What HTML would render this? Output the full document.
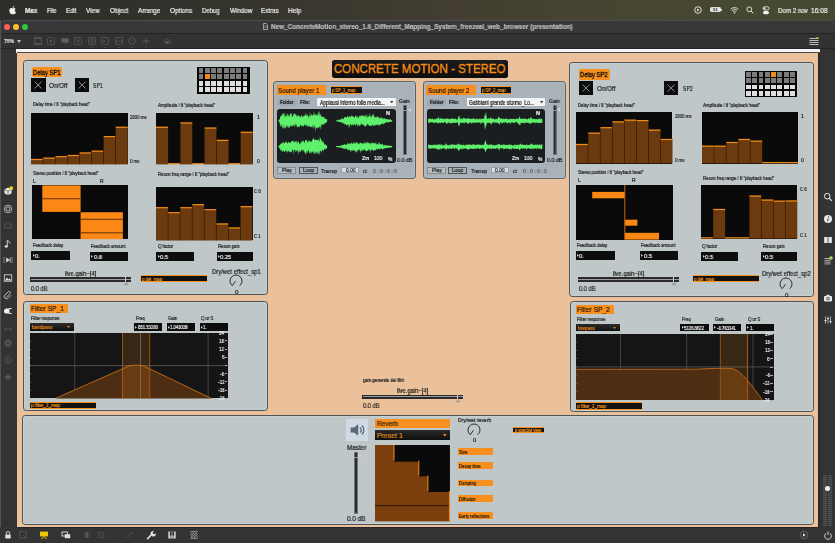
<!DOCTYPE html>
<html><head><meta charset="utf-8"><style>
html,body{margin:0;padding:0;}
body{width:835px;height:543px;overflow:hidden;position:relative;background:#2b2b2b;font-family:"Liberation Sans",sans-serif;}
.a{position:absolute;}
.t{position:absolute;white-space:nowrap;line-height:1;will-change:transform;-webkit-text-stroke:0.2px currentColor;}
svg.a{overflow:visible;}
</style></head><body>
<div class="a " style="left:0px;top:0px;width:835px;height:20px;background:linear-gradient(90deg,#2d2d29 0%,#35342d 30%,#423d31 52%,#474631 75%,#464930 100%);"></div>
<div class="t" style="left:24.60px;top:8px;font-size:6.6px;color:#ececec;font-weight:bold;transform:scaleX(0.958);transform-origin:0 50%;">Max</div>
<div class="t" style="left:46.50px;top:8px;font-size:6.6px;color:#ececec;transform:scaleX(0.893);transform-origin:0 50%;">File</div>
<div class="t" style="left:65.90px;top:8px;font-size:6.6px;color:#ececec;transform:scaleX(0.914);transform-origin:0 50%;">Edit</div>
<div class="t" style="left:86.30px;top:8px;font-size:6.6px;color:#ececec;transform:scaleX(0.952);transform-origin:0 50%;">View</div>
<div class="t" style="left:110.00px;top:8px;font-size:6.6px;color:#ececec;transform:scaleX(0.959);transform-origin:0 50%;">Object</div>
<div class="t" style="left:137.80px;top:8px;font-size:6.6px;color:#ececec;transform:scaleX(0.954);transform-origin:0 50%;">Arrange</div>
<div class="t" style="left:169.80px;top:8px;font-size:6.6px;color:#ececec;transform:scaleX(0.972);transform-origin:0 50%;">Options</div>
<div class="t" style="left:202.10px;top:8px;font-size:6.6px;color:#ececec;transform:scaleX(0.910);transform-origin:0 50%;">Debug</div>
<div class="t" style="left:229.50px;top:8px;font-size:6.6px;color:#ececec;transform:scaleX(0.954);transform-origin:0 50%;">Window</div>
<div class="t" style="left:261.40px;top:8px;font-size:6.6px;color:#ececec;transform:scaleX(0.941);transform-origin:0 50%;">Extras</div>
<div class="t" style="left:288.30px;top:8px;font-size:6.6px;color:#ececec;transform:scaleX(0.965);transform-origin:0 50%;">Help</div>
<svg class="a" style="left:9px;top:6px" width="7" height="8" viewBox="0 0 14 16"><path fill="#f0f0f0" d="M11.6 8.5c0-2 1.6-2.9 1.7-3-0.9-1.4-2.4-1.6-2.9-1.6-1.2-0.1-2.4 0.7-3 0.7-0.6 0-1.6-0.7-2.6-0.7C3.4 4 2 4.8 1.3 6.1c-1.5 2.6-0.4 6.4 1.1 8.5 0.7 1 1.5 2.2 2.6 2.1 1-0.1 1.4-0.7 2.7-0.7 1.2 0 1.6 0.7 2.7 0.6 1.100-0 1.800-1 2.500-2.100 0.8-1.1 1.100-2.200 1.100-2.300-0.1 0-2.300-0.900-2.400-3.700zM9.600 2.600c0.600-0.700 1-1.700 0.900-2.600-0.800 0-1.800 0.500-2.400 1.200-0.500 0.600-1 1.600-0.900 2.500 0.900 0.100 1.800-0.400 2.400-1.100z"/></svg>
<svg class="a" style="left:694px;top:6px" width="8" height="8" viewBox="0 0 8 8"><circle cx="4" cy="4" r="3.3" fill="none" stroke="#eee" stroke-width="0.9"/><path d="M3.2 2.6L5.4 4 3.2 5.4z" fill="#eee"/></svg>
<div class="a " style="left:710px;top:7.4px;width:11px;height:4.8px;border:0.8px solid #ddd;border-radius:1.2px;background:#e6e6e6;box-sizing:border-box;"></div>
<div class="t" style="left:713.16px;top:8px;font-size:4.2px;color:#2a2a2a;font-weight:bold;-webkit-text-stroke:0;">53</div>
<div class="a " style="left:721.3px;top:8.8px;width:1px;height:2px;background:#ddd;"></div>
<svg class="a" style="left:729.5px;top:6px" width="9" height="8" viewBox="0 0 9 8"><path d="M0.6 3.2a5.6 5.6 0 0 1 7.8 0M1.9 4.6a3.7 3.7 0 0 1 5.2 0M3.2 6a1.8 1.8 0 0 1 2.6 0" fill="none" stroke="#eee" stroke-width="0.9"/><circle cx="4.5" cy="7.2" r="0.6" fill="#eee"/></svg>
<svg class="a" style="left:746px;top:6px" width="8" height="8" viewBox="0 0 8 8"><circle cx="3.3" cy="3.3" r="2.4" fill="none" stroke="#eee" stroke-width="0.9"/><path d="M5 5L7.3 7.3" stroke="#eee" stroke-width="1"/></svg>
<svg class="a" style="left:762px;top:5.5px" width="8" height="9" viewBox="0 0 8 9"><rect x="1" y="0.8" width="6" height="3.2" rx="1.6" fill="none" stroke="#eee" stroke-width="0.9"/><rect x="1" y="5" width="6" height="3.2" rx="1.6" fill="#eee"/><circle cx="2.6" cy="2.4" r="0.9" fill="#eee"/></svg>
<div class="t" style="left:777.80px;top:8px;font-size:6.6px;color:#ececec;transform:scaleX(0.937);transform-origin:0 50%;">Dom 2 nov</div>
<div class="t" style="left:811.40px;top:8px;font-size:6.6px;color:#ececec;transform:scaleX(1.005);transform-origin:0 50%;">16:08</div>
<div class="a " style="left:0px;top:20.3px;width:835px;height:13.2px;background:#383838;border-radius:5px 5px 0 0;box-shadow:inset 0 0.6px 0 #5a5e66;"></div>
<div class="a " style="left:3.9px;top:23.9px;width:6.2px;height:6.2px;background:#fe5f57;border-radius:50%;"></div>
<div class="a " style="left:12.9px;top:23.9px;width:6.2px;height:6.2px;background:#febc2e;border-radius:50%;"></div>
<div class="a " style="left:21.9px;top:23.9px;width:6.2px;height:6.2px;background:#2bc840;border-radius:50%;"></div>
<svg class="a" style="left:262.5px;top:23px" width="5" height="7" viewBox="0 0 5 7"><path d="M0.5 0.5h2.6l1.4 1.4v4.6h-4z" fill="none" stroke="#bbb" stroke-width="0.8"/><path d="M1.3 3h2.4M1.3 4.3h2.4" stroke="#bbb" stroke-width="0.5"/></svg>
<div class="t" style="left:270.60px;top:24px;font-size:6.6px;color:#bdbdbd;font-weight:bold;transform:scaleX(0.966);transform-origin:0 50%;">New_ConcreteMotion_stereo_1.6_Different_Mapping_System_freezeal_web_browser (presentation)</div>
<div class="a " style="left:0px;top:33.3px;width:835px;height:15.4px;background:#323232;border-top:0.8px solid #222;border-bottom:0.8px solid #242424;box-sizing:border-box;"></div>
<div class="t" style="left:4.00px;top:39px;font-size:5.6px;color:#d8d8d8;font-weight:bold;transform:scaleX(0.892);transform-origin:0 50%;">75%</div>
<svg class="a" style="left:16.5px;top:40px" width="4" height="3" viewBox="0 0 4 3"><path d="M0 0h4L2 3z" fill="#ccc"/></svg>
<svg class="a" style="left:33.8px;top:37.3px" width="8" height="8" viewBox="0 0 8 8"><rect x="0.8" y="1" width="6.4" height="6" fill="none" stroke="#606060" stroke-width="0.7"/><path d="M0.4 1h7.2M0.4 7h7.2" stroke="#606060" stroke-width="1.2"/></svg>
<svg class="a" style="left:47.1px;top:37.3px" width="8" height="8" viewBox="0 0 8 8"><rect x="0.5" y="0.8" width="7" height="6.4" rx="0.6" fill="none" stroke="#606060" stroke-width="0.7"/><rect x="2.6" y="3.3" width="2.8" height="1.4" fill="#606060"/></svg>
<svg class="a" style="left:60.7px;top:37.3px" width="8" height="8" viewBox="0 0 8 8"><path d="M0.4 1.2h7.2v4.2H5.2L4.4 7 3.8 5.4H0.4z" fill="#606060"/></svg>
<svg class="a" style="left:74.1px;top:37.3px" width="8" height="8" viewBox="0 0 8 8"><rect x="0.5" y="0.6" width="7" height="6.8" rx="0.6" fill="none" stroke="#606060" stroke-width="0.7"/><path d="M2.2 2.3l3.6 3.4M5.8 2.3L2.2 5.7" stroke="#606060" stroke-width="0.6"/></svg>
<svg class="a" style="left:87.7px;top:37.3px" width="8" height="8" viewBox="0 0 8 8"><rect x="0.5" y="0.6" width="7" height="6.8" rx="0.6" fill="none" stroke="#606060" stroke-width="0.7"/><circle cx="4" cy="4" r="2" fill="none" stroke="#606060" stroke-width="0.6"/><path d="M3.4 3l1.4 1-1.4 1z" fill="#606060"/></svg>
<svg class="a" style="left:90.7px;top:46.6px" width="2" height="1.2" viewBox="0 0 2 1.2"><path d="M0 0h2L1 1.2z" fill="#5a5a5a"/></svg>
<svg class="a" style="left:101.1px;top:37.3px" width="8" height="8" viewBox="0 0 8 8"><rect x="0.5" y="0.6" width="7" height="6.8" rx="0.6" fill="none" stroke="#606060" stroke-width="0.7"/><path d="M2.4 2.6l2 1.4-2 1.4z" fill="#606060"/></svg>
<svg class="a" style="left:104.1px;top:46.6px" width="2" height="1.2" viewBox="0 0 2 1.2"><path d="M0 0h2L1 1.2z" fill="#5a5a5a"/></svg>
<svg class="a" style="left:114.6px;top:37.3px" width="8" height="8" viewBox="0 0 8 8"><rect x="0.5" y="0.6" width="7" height="6.8" rx="0.6" fill="none" stroke="#606060" stroke-width="0.7"/><path d="M0.5 4h7" stroke="#606060" stroke-width="0.7"/></svg>
<svg class="a" style="left:117.6px;top:46.6px" width="2" height="1.2" viewBox="0 0 2 1.2"><path d="M0 0h2L1 1.2z" fill="#5a5a5a"/></svg>
<svg class="a" style="left:128.1px;top:37.3px" width="8" height="8" viewBox="0 0 8 8"><circle cx="4" cy="4" r="3.4" fill="none" stroke="#606060" stroke-width="0.7"/><path d="M4 4l1.6-2" stroke="#606060" stroke-width="0.7"/></svg>
<svg class="a" style="left:131.1px;top:46.6px" width="2" height="1.2" viewBox="0 0 2 1.2"><path d="M0 0h2L1 1.2z" fill="#5a5a5a"/></svg>
<svg class="a" style="left:141.7px;top:37.3px" width="8" height="8" viewBox="0 0 8 8"><path d="M4 0.8v6.4M0.8 4h6.4" stroke="#606060" stroke-width="0.8"/></svg>
<svg class="a" style="left:144.7px;top:46.6px" width="2" height="1.2" viewBox="0 0 2 1.2"><path d="M0 0h2L1 1.2z" fill="#5a5a5a"/></svg>
<svg class="a" style="left:163.3px;top:37.3px" width="8" height="8" viewBox="0 0 8 8"><path d="M1 4.2L4 1.2l3 3-3 3z" fill="none" stroke="#606060" stroke-width="0.8"/><path d="M1.6 4.4h4.8L4 6.8z" fill="#606060"/><path d="M7.4 5.2v1.8" stroke="#606060" stroke-width="0.8"/></svg>
<svg class="a" style="left:809px;top:37px" width="10" height="9" viewBox="0 0 10 9"><path d="M0.5 1.5h9M0.5 3.5h9M0.5 5.5h9M0.5 7.5h9" stroke="#bbb" stroke-width="1.2"/><rect x="7.5" y="0" width="2" height="1.4" fill="#e0b000"/></svg>
<div class="a " style="left:0px;top:48.5px;width:16.5px;height:479px;background:#333333;"></div>
<div class="a " style="left:0px;top:20.3px;width:1.1px;height:523px;background:#4f5459;"></div>
<div class="a " style="left:819.5px;top:48.5px;width:15.5px;height:479px;background:#333333;"></div>
<div class="a " style="left:0px;top:527.3px;width:835px;height:15.7px;background:#333333;"></div>
<div class="a " style="left:16px;top:527.3px;width:804px;height:0.8px;background:#262626;"></div>
<div class="a " style="left:16px;top:49px;width:804px;height:3.5px;background:#f4f4f4;"></div>
<div class="a " style="left:16.5px;top:52.3px;width:803px;height:0.8px;background:#4a4a4a;"></div>
<div class="a " style="left:16.5px;top:52.5px;width:1px;height:475px;background:#4a4a4a;"></div>
<div class="a " style="left:17.3px;top:53px;width:801.2px;height:474.3px;background:#ebc19b;"></div>
<div class="a " style="left:22.5px;top:60.2px;width:245.6px;height:234.9px;background:#bfc7c8;border:1px solid #4f5456;border-radius:3.2px;box-sizing:border-box;box-shadow:inset 0 0 0 0.6px #cfd9d9;"></div>
<div class="a " style="left:31.6px;top:66.9px;width:30.7px;height:10px;background:#f7901e;border-radius:2px;"></div>
<div class="t " style="left:33.2px;top:68.0px;font-size:7.4px;color:#1b1206;"></div>
<div class="t" style="left:33.00px;top:69px;font-size:7.2px;color:#140c04;transform:scaleX(0.811);transform-origin:0 50%;-webkit-text-stroke:0.3px currentColor;">Delay SP1</div>
<div class="a " style="left:31.4px;top:77.9px;width:14.2px;height:14.2px;background:#0b0b0b;"></div>
<svg class="a" style="left:31.4px;top:77.9px" width="14.2" height="14.2" viewBox="0 0 14 14"><path d="M3.6 3.6L10.4 10.4M10.4 3.6L3.6 10.4" stroke="#a0a0a0" stroke-width="0.9"/></svg>
<div class="t" style="left:48.90px;top:83px;font-size:6.6px;color:#222;transform:scaleX(0.952);transform-origin:0 50%;">On/Off</div>
<div class="a " style="left:74.6px;top:77.9px;width:14.2px;height:14.2px;background:#0b0b0b;"></div>
<svg class="a" style="left:74.6px;top:77.9px" width="14.2" height="14.2" viewBox="0 0 14 14"><path d="M3.6 3.6L10.4 10.4M10.4 3.6L3.6 10.4" stroke="#a0a0a0" stroke-width="0.9"/></svg>
<div class="t" style="left:92.70px;top:83px;font-size:6.6px;color:#222;transform:scaleX(0.786);transform-origin:0 50%;">SP1</div>
<div class="a " style="left:197.1px;top:67.1px;width:52.8px;height:26.6px;background:#060606;"></div>
<div class="a " style="left:198.5px;top:68.1px;width:4.9px;height:4.9px;background:#7b7b7b;"></div>
<div class="a " style="left:204.8px;top:68.1px;width:4.9px;height:4.9px;background:#7b7b7b;"></div>
<div class="a " style="left:211.1px;top:68.1px;width:4.9px;height:4.9px;background:#7b7b7b;"></div>
<div class="a " style="left:217.4px;top:68.1px;width:4.9px;height:4.9px;background:#7b7b7b;"></div>
<div class="a " style="left:223.7px;top:68.1px;width:4.9px;height:4.9px;background:#7b7b7b;"></div>
<div class="a " style="left:230.0px;top:68.1px;width:4.9px;height:4.9px;background:#7b7b7b;"></div>
<div class="a " style="left:236.3px;top:68.1px;width:4.9px;height:4.9px;background:#7b7b7b;"></div>
<div class="a " style="left:242.6px;top:68.1px;width:4.9px;height:4.9px;background:#7b7b7b;"></div>
<div class="a " style="left:198.5px;top:74.39999999999999px;width:4.9px;height:4.9px;background:#7b7b7b;"></div>
<div class="a " style="left:204.8px;top:74.39999999999999px;width:4.9px;height:4.9px;background:#f28a16;"></div>
<div class="a " style="left:211.1px;top:74.39999999999999px;width:4.9px;height:4.9px;background:#7b7b7b;"></div>
<div class="a " style="left:217.4px;top:74.39999999999999px;width:4.9px;height:4.9px;background:#7b7b7b;"></div>
<div class="a " style="left:223.7px;top:74.39999999999999px;width:4.9px;height:4.9px;background:#7b7b7b;"></div>
<div class="a " style="left:230.0px;top:74.39999999999999px;width:4.9px;height:4.9px;background:#7b7b7b;"></div>
<div class="a " style="left:236.3px;top:74.39999999999999px;width:4.9px;height:4.9px;background:#7b7b7b;"></div>
<div class="a " style="left:242.6px;top:74.39999999999999px;width:4.9px;height:4.9px;background:#7b7b7b;"></div>
<div class="a " style="left:198.5px;top:80.69999999999999px;width:4.9px;height:4.9px;background:#dedede;"></div>
<div class="a " style="left:204.8px;top:80.69999999999999px;width:4.9px;height:4.9px;background:#dedede;"></div>
<div class="a " style="left:211.1px;top:80.69999999999999px;width:4.9px;height:4.9px;background:#dedede;"></div>
<div class="a " style="left:217.4px;top:80.69999999999999px;width:4.9px;height:4.9px;background:#dedede;"></div>
<div class="a " style="left:223.7px;top:80.69999999999999px;width:4.9px;height:4.9px;background:#dedede;"></div>
<div class="a " style="left:230.0px;top:80.69999999999999px;width:4.9px;height:4.9px;background:#dedede;"></div>
<div class="a " style="left:236.3px;top:80.69999999999999px;width:4.9px;height:4.9px;background:#dedede;"></div>
<div class="a " style="left:242.6px;top:80.69999999999999px;width:4.9px;height:4.9px;background:#dedede;"></div>
<div class="a " style="left:198.5px;top:87.0px;width:4.9px;height:4.9px;background:#dedede;"></div>
<div class="a " style="left:204.8px;top:87.0px;width:4.9px;height:4.9px;background:#dedede;"></div>
<div class="a " style="left:211.1px;top:87.0px;width:4.9px;height:4.9px;background:#dedede;"></div>
<div class="a " style="left:217.4px;top:87.0px;width:4.9px;height:4.9px;background:#dedede;"></div>
<div class="a " style="left:223.7px;top:87.0px;width:4.9px;height:4.9px;background:#dedede;"></div>
<div class="a " style="left:230.0px;top:87.0px;width:4.9px;height:4.9px;background:#dedede;"></div>
<div class="a " style="left:236.3px;top:87.0px;width:4.9px;height:4.9px;background:#dedede;"></div>
<div class="a " style="left:242.6px;top:87.0px;width:4.9px;height:4.9px;background:#dedede;"></div>
<div class="t" style="left:33.00px;top:102px;font-size:5.0px;color:#1e1e1e;transform:scaleX(0.838);transform-origin:0 50%;">Delay time / 8 "playback head"</div>
<div class="a " style="left:31.4px;top:113px;width:96.7px;height:51.4px;background:#0a0a0a;"></div>
<svg class="a" style="left:31.4px;top:113px" width="96.7" height="51.4" viewBox="0 0 96.7 51.4"><rect x="0.00" y="45.90" width="12.09" height="5.50" fill="#6b3a0f"/><rect x="0.00" y="45.90" width="12.09" height="1.2" fill="#f08a1a"/><rect x="12.09" y="44.60" width="12.09" height="6.80" fill="#6b3a0f"/><rect x="12.09" y="44.60" width="12.09" height="1.2" fill="#f08a1a"/><rect x="11.84" y="44.60" width="0.5" height="6.80" fill="#2a1605"/><rect x="24.18" y="43.10" width="12.09" height="8.30" fill="#6b3a0f"/><rect x="24.18" y="43.10" width="12.09" height="1.2" fill="#f08a1a"/><rect x="23.93" y="43.10" width="0.5" height="8.30" fill="#2a1605"/><rect x="36.26" y="41.90" width="12.09" height="9.50" fill="#6b3a0f"/><rect x="36.26" y="41.90" width="12.09" height="1.2" fill="#f08a1a"/><rect x="36.01" y="41.90" width="0.5" height="9.50" fill="#2a1605"/><rect x="48.35" y="39.40" width="12.09" height="12.00" fill="#6b3a0f"/><rect x="48.35" y="39.40" width="12.09" height="1.2" fill="#f08a1a"/><rect x="48.10" y="39.40" width="0.5" height="12.00" fill="#2a1605"/><rect x="60.44" y="37.60" width="12.09" height="13.80" fill="#6b3a0f"/><rect x="60.44" y="37.60" width="12.09" height="1.2" fill="#f08a1a"/><rect x="60.19" y="37.60" width="0.5" height="13.80" fill="#2a1605"/><rect x="72.53" y="23.00" width="12.09" height="28.40" fill="#6b3a0f"/><rect x="72.53" y="23.00" width="12.09" height="1.2" fill="#f08a1a"/><rect x="72.28" y="23.00" width="0.5" height="28.40" fill="#2a1605"/><rect x="84.61" y="13.70" width="12.09" height="37.70" fill="#6b3a0f"/><rect x="84.61" y="13.70" width="12.09" height="1.2" fill="#f08a1a"/><rect x="84.36" y="13.70" width="0.5" height="37.70" fill="#2a1605"/></svg>
<div class="t" style="left:130.00px;top:115px;font-size:5.0px;color:#1e1e1e;transform:scaleX(0.860);transform-origin:0 50%;">2000 ms</div>
<div class="t" style="left:130.00px;top:159px;font-size:5.0px;color:#1e1e1e;transform:scaleX(0.860);transform-origin:0 50%;">0 ms</div>
<div class="t" style="left:158.00px;top:103px;font-size:5.0px;color:#1e1e1e;transform:scaleX(0.860);transform-origin:0 50%;">Amplitude / 8 "playback head"</div>
<div class="a " style="left:156.3px;top:113px;width:96.7px;height:51.4px;background:#0a0a0a;"></div>
<svg class="a" style="left:156.3px;top:113px" width="96.7" height="51.4" viewBox="0 0 96.7 51.4"><rect x="0.00" y="13.70" width="12.09" height="37.70" fill="#6b3a0f"/><rect x="0.00" y="13.70" width="12.09" height="1.2" fill="#f08a1a"/><rect x="12.09" y="50.10" width="12.09" height="1.3" fill="#f08a1a"/><rect x="24.18" y="9.40" width="12.09" height="42.00" fill="#6b3a0f"/><rect x="24.18" y="9.40" width="12.09" height="1.2" fill="#f08a1a"/><rect x="23.93" y="9.40" width="0.5" height="42.00" fill="#2a1605"/><rect x="36.26" y="50.10" width="12.09" height="1.3" fill="#f08a1a"/><rect x="48.35" y="14.50" width="12.09" height="36.90" fill="#6b3a0f"/><rect x="48.35" y="14.50" width="12.09" height="1.2" fill="#f08a1a"/><rect x="48.10" y="14.50" width="0.5" height="36.90" fill="#2a1605"/><rect x="60.44" y="26.80" width="12.09" height="24.60" fill="#6b3a0f"/><rect x="60.44" y="26.80" width="12.09" height="1.2" fill="#f08a1a"/><rect x="60.19" y="26.80" width="0.5" height="24.60" fill="#2a1605"/><rect x="72.53" y="50.10" width="12.09" height="1.3" fill="#f08a1a"/><rect x="84.61" y="18.70" width="12.09" height="32.70" fill="#6b3a0f"/><rect x="84.61" y="18.70" width="12.09" height="1.2" fill="#f08a1a"/><rect x="84.36" y="18.70" width="0.5" height="32.70" fill="#2a1605"/></svg>
<div class="t" style="left:257.00px;top:115px;font-size:5.0px;color:#1e1e1e;">1</div>
<div class="t" style="left:257.00px;top:159px;font-size:5.0px;color:#1e1e1e;">0</div>
<div class="t" style="left:33.20px;top:171px;font-size:5.0px;color:#1e1e1e;transform:scaleX(0.845);transform-origin:0 50%;">Stereo position / 8 "playback head"</div>
<div class="t" style="left:33.20px;top:179px;font-size:5.0px;color:#1e1e1e;">L</div>
<div class="t" style="left:100.20px;top:179px;font-size:5.0px;color:#1e1e1e;">R</div>
<svg class="a" style="left:31.7px;top:185.2px;background:#0a0a0a" width="96.4" height="54.2" viewBox="0 0 96.4 54.2"><rect x="10.30" y="0.40" width="38.30" height="26.50" fill="#fb8714"/><rect x="48.60" y="27.20" width="42.30" height="27.00" fill="#fb8714"/><rect x="10.30" y="13.10" width="38.30" height="1.2" fill="#7a3e06"/><rect x="48.60" y="33.70" width="42.30" height="1.2" fill="#7a3e06"/><rect x="48.60" y="47.20" width="42.30" height="1.2" fill="#7a3e06"/></svg>
<div class="t" style="left:158.00px;top:172px;font-size:5.0px;color:#1e1e1e;transform:scaleX(0.860);transform-origin:0 50%;">Reson freq range / 8 "playback head"</div>
<div class="a " style="left:156.3px;top:186.9px;width:96.3px;height:53.5px;background:#0a0a0a;"></div>
<svg class="a" style="left:156.3px;top:186.9px" width="96.3" height="53.5" viewBox="0 0 96.3 53.5"><rect x="0.00" y="20.10" width="12.04" height="33.40" fill="#6b3a0f"/><rect x="0.00" y="20.10" width="12.04" height="1.2" fill="#f08a1a"/><rect x="12.04" y="25.10" width="12.04" height="28.40" fill="#6b3a0f"/><rect x="12.04" y="25.10" width="12.04" height="1.2" fill="#f08a1a"/><rect x="11.79" y="25.10" width="0.5" height="28.40" fill="#2a1605"/><rect x="24.07" y="20.10" width="12.04" height="33.40" fill="#6b3a0f"/><rect x="24.07" y="20.10" width="12.04" height="1.2" fill="#f08a1a"/><rect x="23.82" y="20.10" width="0.5" height="33.40" fill="#2a1605"/><rect x="36.11" y="17.10" width="12.04" height="36.40" fill="#6b3a0f"/><rect x="36.11" y="17.10" width="12.04" height="1.2" fill="#f08a1a"/><rect x="35.86" y="17.10" width="0.5" height="36.40" fill="#2a1605"/><rect x="48.15" y="22.10" width="12.04" height="31.40" fill="#6b3a0f"/><rect x="48.15" y="22.10" width="12.04" height="1.2" fill="#f08a1a"/><rect x="47.90" y="22.10" width="0.5" height="31.40" fill="#2a1605"/><rect x="60.19" y="36.40" width="12.04" height="17.10" fill="#6b3a0f"/><rect x="60.19" y="36.40" width="12.04" height="1.2" fill="#f08a1a"/><rect x="59.94" y="36.40" width="0.5" height="17.10" fill="#2a1605"/><rect x="72.22" y="40.40" width="12.04" height="13.10" fill="#6b3a0f"/><rect x="72.22" y="40.40" width="12.04" height="1.2" fill="#f08a1a"/><rect x="71.97" y="40.40" width="0.5" height="13.10" fill="#2a1605"/><rect x="84.26" y="19.10" width="12.04" height="34.40" fill="#6b3a0f"/><rect x="84.26" y="19.10" width="12.04" height="1.2" fill="#f08a1a"/><rect x="84.01" y="19.10" width="0.5" height="34.40" fill="#2a1605"/></svg>
<div class="t" style="left:254.40px;top:189px;font-size:5.0px;color:#1e1e1e;transform:scaleX(0.860);transform-origin:0 50%;">C 6</div>
<div class="t" style="left:254.40px;top:234px;font-size:5.0px;color:#1e1e1e;transform:scaleX(0.860);transform-origin:0 50%;">C 1</div>
<div class="t" style="left:33.00px;top:243px;font-size:5.0px;color:#1e1e1e;transform:scaleX(0.860);transform-origin:0 50%;">Feedback delay</div>
<div class="a " style="left:31.4px;top:251px;width:39px;height:8.8px;background:#0d0d0d;"></div>
<svg class="a" style="left:32.699999999999996px;top:254.0px" width="2" height="2.8" viewBox="0 0 2 2.8"><path d="M0 0L1.9 1.4 0 2.8z" fill="#d8d8d8"/></svg>
<div class="t" style="left:35.00px;top:253px;font-size:6.2px;color:#f2f2f2;transform:scaleX(0.920);transform-origin:0 50%;">0.</div>
<div class="t" style="left:91.30px;top:244px;font-size:5.0px;color:#1e1e1e;transform:scaleX(0.860);transform-origin:0 50%;">Feedback amount</div>
<div class="a " style="left:90px;top:251.7px;width:38px;height:9.3px;background:#0d0d0d;"></div>
<svg class="a" style="left:91.3px;top:254.94999999999996px" width="2" height="2.8" viewBox="0 0 2 2.8"><path d="M0 0L1.9 1.4 0 2.8z" fill="#d8d8d8"/></svg>
<div class="t" style="left:93.60px;top:254px;font-size:6.2px;color:#f2f2f2;transform:scaleX(0.920);transform-origin:0 50%;">0.8</div>
<div class="t" style="left:158.00px;top:244px;font-size:5.0px;color:#1e1e1e;transform:scaleX(0.860);transform-origin:0 50%;">Q factor</div>
<div class="a " style="left:156.4px;top:251.7px;width:37.3px;height:9.3px;background:#0d0d0d;"></div>
<svg class="a" style="left:157.70000000000002px;top:254.94999999999996px" width="2" height="2.8" viewBox="0 0 2 2.8"><path d="M0 0L1.9 1.4 0 2.8z" fill="#d8d8d8"/></svg>
<div class="t" style="left:160.00px;top:254px;font-size:6.2px;color:#f2f2f2;transform:scaleX(0.920);transform-origin:0 50%;">0.5</div>
<div class="t" style="left:218.00px;top:244px;font-size:5.0px;color:#1e1e1e;transform:scaleX(0.860);transform-origin:0 50%;">Reson gain</div>
<div class="a " style="left:216.6px;top:251.7px;width:36px;height:9.3px;background:#0d0d0d;"></div>
<svg class="a" style="left:217.9px;top:254.94999999999996px" width="2" height="2.8" viewBox="0 0 2 2.8"><path d="M0 0L1.9 1.4 0 2.8z" fill="#d8d8d8"/></svg>
<div class="t" style="left:220.20px;top:254px;font-size:6.2px;color:#f2f2f2;transform:scaleX(0.920);transform-origin:0 50%;">0.25</div>
<div class="t" style="left:64.85px;top:270px;font-size:7.0px;color:#1a1a1a;transform:scaleX(0.833);transform-origin:0 50%;">live.gain~[4]</div>
<div class="a " style="left:30.2px;top:277.4px;width:101px;height:4.2px;background:#2a2a2a;"></div>
<div class="a " style="left:30.5px;top:278.9px;width:100.4px;height:1.0px;background:#9a9a9a;"></div>
<svg class="a" style="left:123.6px;top:281.59999999999997px" width="4.4" height="3" viewBox="0 0 4.4 3"><path d="M2.2 0.2L4 2.8H0.4z" fill="#c9cfd0" stroke="#666" stroke-width="0.5"/></svg>
<div class="a " style="left:125.3px;top:277.2px;width:1px;height:4.6px;background:#d0d0d0;"></div>
<div class="t" style="left:31.00px;top:286px;font-size:6.6px;color:#1e1e1e;transform:scaleX(0.860);transform-origin:0 50%;">0.0 dB</div>
<div class="a " style="left:141.3px;top:274.59999999999997px;width:66.2px;height:7.8999999999999995px;background:#121212;border:1.2px solid #f7901e;border-width:1.2px 0;box-sizing:border-box;"></div>
<div class="t" style="left:142.10px;top:278px;font-size:4.8px;color:#f7901e;transform:scaleX(0.906);transform-origin:0 50%;">p del_map</div>
<div class="t" style="left:211.95px;top:268px;font-size:7px;color:#1e1e1e;transform:scaleX(0.842);transform-origin:0 50%;">Dry/wet effect_sp1</div>
<svg class="a" style="left:229.3px;top:273.7px" width="14.0" height="14.0" viewBox="-7.0 -7.0 14.0 14.0"><path d="M-3.72 4.68A6.0 6.0 0 1 1 3.72 4.68" fill="none" stroke="#1e1e1e" stroke-width="0.9"/><path d="M-0.60 0.30L-3.72 4.68" stroke="#1e1e1e" stroke-width="0.9"/></svg>
<div class="t" style="left:234.58px;top:289px;font-size:6.2px;color:#1e1e1e;">0</div>
<div class="a " style="left:568.8px;top:62.4px;width:244.8px;height:234.6px;background:#bfc7c8;border:1px solid #4f5456;border-radius:3.2px;box-sizing:border-box;box-shadow:inset 0 0 0 0.6px #cfd9d9;"></div>
<div class="a " style="left:578.8px;top:69.2px;width:31px;height:10.5px;background:#f7901e;border-radius:2px;"></div>
<div class="t " style="left:580.4px;top:70.55px;font-size:7.4px;color:#1b1206;"></div>
<div class="t" style="left:580.30px;top:71px;font-size:7.2px;color:#140c04;transform:scaleX(0.811);transform-origin:0 50%;-webkit-text-stroke:0.3px currentColor;">Delay SP2</div>
<div class="a " style="left:578.5px;top:80.9px;width:14.2px;height:14.2px;background:#0b0b0b;"></div>
<svg class="a" style="left:578.5px;top:80.9px" width="14.2" height="14.2" viewBox="0 0 14 14"><path d="M3.6 3.6L10.4 10.4M10.4 3.6L3.6 10.4" stroke="#a0a0a0" stroke-width="0.9"/></svg>
<div class="t" style="left:596.90px;top:86px;font-size:6.6px;color:#222;transform:scaleX(0.952);transform-origin:0 50%;">On/Off</div>
<div class="a " style="left:663.5px;top:80.7px;width:14.2px;height:14.2px;background:#0b0b0b;"></div>
<svg class="a" style="left:663.5px;top:80.7px" width="14.2" height="14.2" viewBox="0 0 14 14"><path d="M3.6 3.6L10.4 10.4M10.4 3.6L3.6 10.4" stroke="#a0a0a0" stroke-width="0.9"/></svg>
<div class="t" style="left:682.80px;top:86px;font-size:6.6px;color:#222;transform:scaleX(0.786);transform-origin:0 50%;">SP2</div>
<div class="a " style="left:744.5px;top:70.9px;width:52.8px;height:26.6px;background:#060606;"></div>
<div class="a " style="left:745.9px;top:71.9px;width:4.9px;height:4.9px;background:#7b7b7b;"></div>
<div class="a " style="left:752.1999999999999px;top:71.9px;width:4.9px;height:4.9px;background:#7b7b7b;"></div>
<div class="a " style="left:758.5px;top:71.9px;width:4.9px;height:4.9px;background:#7b7b7b;"></div>
<div class="a " style="left:764.8px;top:71.9px;width:4.9px;height:4.9px;background:#7b7b7b;"></div>
<div class="a " style="left:771.1px;top:71.9px;width:4.9px;height:4.9px;background:#f28a16;"></div>
<div class="a " style="left:777.4px;top:71.9px;width:4.9px;height:4.9px;background:#7b7b7b;"></div>
<div class="a " style="left:783.6999999999999px;top:71.9px;width:4.9px;height:4.9px;background:#7b7b7b;"></div>
<div class="a " style="left:790.0px;top:71.9px;width:4.9px;height:4.9px;background:#7b7b7b;"></div>
<div class="a " style="left:745.9px;top:78.2px;width:4.9px;height:4.9px;background:#7b7b7b;"></div>
<div class="a " style="left:752.1999999999999px;top:78.2px;width:4.9px;height:4.9px;background:#7b7b7b;"></div>
<div class="a " style="left:758.5px;top:78.2px;width:4.9px;height:4.9px;background:#7b7b7b;"></div>
<div class="a " style="left:764.8px;top:78.2px;width:4.9px;height:4.9px;background:#7b7b7b;"></div>
<div class="a " style="left:771.1px;top:78.2px;width:4.9px;height:4.9px;background:#7b7b7b;"></div>
<div class="a " style="left:777.4px;top:78.2px;width:4.9px;height:4.9px;background:#7b7b7b;"></div>
<div class="a " style="left:783.6999999999999px;top:78.2px;width:4.9px;height:4.9px;background:#7b7b7b;"></div>
<div class="a " style="left:790.0px;top:78.2px;width:4.9px;height:4.9px;background:#7b7b7b;"></div>
<div class="a " style="left:745.9px;top:84.5px;width:4.9px;height:4.9px;background:#dedede;"></div>
<div class="a " style="left:752.1999999999999px;top:84.5px;width:4.9px;height:4.9px;background:#dedede;"></div>
<div class="a " style="left:758.5px;top:84.5px;width:4.9px;height:4.9px;background:#dedede;"></div>
<div class="a " style="left:764.8px;top:84.5px;width:4.9px;height:4.9px;background:#dedede;"></div>
<div class="a " style="left:771.1px;top:84.5px;width:4.9px;height:4.9px;background:#dedede;"></div>
<div class="a " style="left:777.4px;top:84.5px;width:4.9px;height:4.9px;background:#dedede;"></div>
<div class="a " style="left:783.6999999999999px;top:84.5px;width:4.9px;height:4.9px;background:#dedede;"></div>
<div class="a " style="left:790.0px;top:84.5px;width:4.9px;height:4.9px;background:#dedede;"></div>
<div class="a " style="left:745.9px;top:90.80000000000001px;width:4.9px;height:4.9px;background:#dedede;"></div>
<div class="a " style="left:752.1999999999999px;top:90.80000000000001px;width:4.9px;height:4.9px;background:#dedede;"></div>
<div class="a " style="left:758.5px;top:90.80000000000001px;width:4.9px;height:4.9px;background:#dedede;"></div>
<div class="a " style="left:764.8px;top:90.80000000000001px;width:4.9px;height:4.9px;background:#dedede;"></div>
<div class="a " style="left:771.1px;top:90.80000000000001px;width:4.9px;height:4.9px;background:#dedede;"></div>
<div class="a " style="left:777.4px;top:90.80000000000001px;width:4.9px;height:4.9px;background:#dedede;"></div>
<div class="a " style="left:783.6999999999999px;top:90.80000000000001px;width:4.9px;height:4.9px;background:#dedede;"></div>
<div class="a " style="left:790.0px;top:90.80000000000001px;width:4.9px;height:4.9px;background:#dedede;"></div>
<div class="t" style="left:577.50px;top:103px;font-size:5.0px;color:#1e1e1e;transform:scaleX(0.838);transform-origin:0 50%;">Delay time / 8 "playback head"</div>
<div class="a " style="left:575.8px;top:112.4px;width:96.5px;height:51.3px;background:#0a0a0a;"></div>
<svg class="a" style="left:575.8px;top:112.4px" width="96.5" height="51.3" viewBox="0 0 96.5 51.3"><rect x="0.00" y="31.90" width="12.06" height="19.40" fill="#6b3a0f"/><rect x="0.00" y="31.90" width="12.06" height="1.2" fill="#f08a1a"/><rect x="12.06" y="20.60" width="12.06" height="30.70" fill="#6b3a0f"/><rect x="12.06" y="20.60" width="12.06" height="1.2" fill="#f08a1a"/><rect x="11.81" y="20.60" width="0.5" height="30.70" fill="#2a1605"/><rect x="24.12" y="15.10" width="12.06" height="36.20" fill="#6b3a0f"/><rect x="24.12" y="15.10" width="12.06" height="1.2" fill="#f08a1a"/><rect x="23.88" y="15.10" width="0.5" height="36.20" fill="#2a1605"/><rect x="36.19" y="9.30" width="12.06" height="42.00" fill="#6b3a0f"/><rect x="36.19" y="9.30" width="12.06" height="1.2" fill="#f08a1a"/><rect x="35.94" y="9.30" width="0.5" height="42.00" fill="#2a1605"/><rect x="48.25" y="7.60" width="12.06" height="43.70" fill="#6b3a0f"/><rect x="48.25" y="7.60" width="12.06" height="1.2" fill="#f08a1a"/><rect x="48.00" y="7.60" width="0.5" height="43.70" fill="#2a1605"/><rect x="60.31" y="8.00" width="12.06" height="43.30" fill="#6b3a0f"/><rect x="60.31" y="8.00" width="12.06" height="1.2" fill="#f08a1a"/><rect x="60.06" y="8.00" width="0.5" height="43.30" fill="#2a1605"/><rect x="72.38" y="17.60" width="12.06" height="33.70" fill="#6b3a0f"/><rect x="72.38" y="17.60" width="12.06" height="1.2" fill="#f08a1a"/><rect x="72.12" y="17.60" width="0.5" height="33.70" fill="#2a1605"/><rect x="84.44" y="26.90" width="12.06" height="24.40" fill="#6b3a0f"/><rect x="84.44" y="26.90" width="12.06" height="1.2" fill="#f08a1a"/><rect x="84.19" y="26.90" width="0.5" height="24.40" fill="#2a1605"/></svg>
<div class="t" style="left:674.80px;top:114px;font-size:5.0px;color:#1e1e1e;transform:scaleX(0.860);transform-origin:0 50%;">2000 ms</div>
<div class="t" style="left:674.80px;top:158px;font-size:5.0px;color:#1e1e1e;transform:scaleX(0.860);transform-origin:0 50%;">0 ms</div>
<div class="t" style="left:702.50px;top:103px;font-size:5.0px;color:#1e1e1e;transform:scaleX(0.860);transform-origin:0 50%;">Amplitude / 8 "playback head"</div>
<div class="a " style="left:701.7px;top:112.4px;width:96.3px;height:51.3px;background:#0a0a0a;"></div>
<svg class="a" style="left:701.7px;top:112.4px" width="96.3" height="51.3" viewBox="0 0 96.3 51.3"><rect x="0.00" y="33.60" width="12.04" height="17.70" fill="#6b3a0f"/><rect x="0.00" y="33.60" width="12.04" height="1.2" fill="#f08a1a"/><rect x="12.04" y="33.60" width="12.04" height="17.70" fill="#6b3a0f"/><rect x="12.04" y="33.60" width="12.04" height="1.2" fill="#f08a1a"/><rect x="11.79" y="33.60" width="0.5" height="17.70" fill="#2a1605"/><rect x="24.07" y="29.90" width="12.04" height="21.40" fill="#6b3a0f"/><rect x="24.07" y="29.90" width="12.04" height="1.2" fill="#f08a1a"/><rect x="23.82" y="29.90" width="0.5" height="21.40" fill="#2a1605"/><rect x="36.11" y="26.90" width="12.04" height="24.40" fill="#6b3a0f"/><rect x="36.11" y="26.90" width="12.04" height="1.2" fill="#f08a1a"/><rect x="35.86" y="26.90" width="0.5" height="24.40" fill="#2a1605"/><rect x="48.15" y="28.60" width="12.04" height="22.70" fill="#6b3a0f"/><rect x="48.15" y="28.60" width="12.04" height="1.2" fill="#f08a1a"/><rect x="47.90" y="28.60" width="0.5" height="22.70" fill="#2a1605"/><rect x="60.19" y="50.00" width="12.04" height="1.3" fill="#f08a1a"/><rect x="72.22" y="50.00" width="12.04" height="1.3" fill="#f08a1a"/><rect x="84.26" y="50.00" width="12.04" height="1.3" fill="#f08a1a"/></svg>
<div class="t" style="left:801.00px;top:114px;font-size:5.0px;color:#1e1e1e;">1</div>
<div class="t" style="left:801.00px;top:158px;font-size:5.0px;color:#1e1e1e;">0</div>
<div class="t" style="left:577.50px;top:170px;font-size:5.0px;color:#1e1e1e;transform:scaleX(0.845);transform-origin:0 50%;">Stereo position / 8 "playback head"</div>
<div class="t" style="left:578.00px;top:178px;font-size:5.0px;color:#1e1e1e;">L</div>
<div class="t" style="left:631.60px;top:178px;font-size:5.0px;color:#1e1e1e;">R</div>
<svg class="a" style="left:575.8px;top:185.1px;background:#0a0a0a" width="96.9" height="54.6" viewBox="0 0 96.9 54.6"><rect x="16.20" y="6.90" width="32.60" height="6.40" fill="#fb8714"/><rect x="48.80" y="34.70" width="12.60" height="6.00" fill="#fb8714"/><rect x="48.80" y="47.80" width="34.20" height="6.80" fill="#fb8714"/><rect x="48.30" y="0" width="1" height="54.6" fill="#c8680c"/></svg>
<div class="t" style="left:702.50px;top:176px;font-size:5.0px;color:#1e1e1e;transform:scaleX(0.860);transform-origin:0 50%;">Reson freq range / 8 "playback head"</div>
<div class="a " style="left:701.2px;top:185.4px;width:96.3px;height:53.5px;background:#0a0a0a;"></div>
<svg class="a" style="left:701.2px;top:185.4px" width="96.3" height="53.5" viewBox="0 0 96.3 53.5"><rect x="0.00" y="52.20" width="12.04" height="1.3" fill="#f08a1a"/><rect x="12.04" y="23.90" width="12.04" height="29.60" fill="#6b3a0f"/><rect x="12.04" y="23.90" width="12.04" height="1.2" fill="#f08a1a"/><rect x="11.79" y="23.90" width="0.5" height="29.60" fill="#2a1605"/><rect x="24.07" y="52.20" width="12.04" height="1.3" fill="#f08a1a"/><rect x="36.11" y="52.20" width="12.04" height="1.3" fill="#f08a1a"/><rect x="48.15" y="10.50" width="12.04" height="43.00" fill="#6b3a0f"/><rect x="48.15" y="10.50" width="12.04" height="1.2" fill="#f08a1a"/><rect x="47.90" y="10.50" width="0.5" height="43.00" fill="#2a1605"/><rect x="60.19" y="14.50" width="12.04" height="39.00" fill="#6b3a0f"/><rect x="60.19" y="14.50" width="12.04" height="1.2" fill="#f08a1a"/><rect x="59.94" y="14.50" width="0.5" height="39.00" fill="#2a1605"/><rect x="72.22" y="15.60" width="12.04" height="37.90" fill="#6b3a0f"/><rect x="72.22" y="15.60" width="12.04" height="1.2" fill="#f08a1a"/><rect x="71.97" y="15.60" width="0.5" height="37.90" fill="#2a1605"/><rect x="84.26" y="15.40" width="12.04" height="38.10" fill="#6b3a0f"/><rect x="84.26" y="15.40" width="12.04" height="1.2" fill="#f08a1a"/><rect x="84.01" y="15.40" width="0.5" height="38.10" fill="#2a1605"/></svg>
<div class="t" style="left:799.50px;top:187px;font-size:5.0px;color:#1e1e1e;transform:scaleX(0.860);transform-origin:0 50%;">C 6</div>
<div class="t" style="left:799.50px;top:233px;font-size:5.0px;color:#1e1e1e;transform:scaleX(0.860);transform-origin:0 50%;">C 1</div>
<div class="t" style="left:577.00px;top:243px;font-size:5.0px;color:#1e1e1e;transform:scaleX(0.860);transform-origin:0 50%;">Feedback delay</div>
<div class="a " style="left:575.8px;top:251px;width:39px;height:8.8px;background:#0d0d0d;"></div>
<svg class="a" style="left:577.0999999999999px;top:254.0px" width="2" height="2.8" viewBox="0 0 2 2.8"><path d="M0 0L1.9 1.4 0 2.8z" fill="#d8d8d8"/></svg>
<div class="t" style="left:579.40px;top:253px;font-size:6.2px;color:#f2f2f2;transform:scaleX(0.920);transform-origin:0 50%;">0.</div>
<div class="t" style="left:641.20px;top:243px;font-size:5.0px;color:#1e1e1e;transform:scaleX(0.860);transform-origin:0 50%;">Feedback amount</div>
<div class="a " style="left:640px;top:251px;width:37.7px;height:8.8px;background:#0d0d0d;"></div>
<svg class="a" style="left:641.3px;top:254.0px" width="2" height="2.8" viewBox="0 0 2 2.8"><path d="M0 0L1.9 1.4 0 2.8z" fill="#d8d8d8"/></svg>
<div class="t" style="left:643.60px;top:253px;font-size:6.2px;color:#f2f2f2;transform:scaleX(0.920);transform-origin:0 50%;">0.5</div>
<div class="t" style="left:702.00px;top:244px;font-size:5.0px;color:#1e1e1e;transform:scaleX(0.860);transform-origin:0 50%;">Q factor</div>
<div class="a " style="left:701.2px;top:252px;width:37.3px;height:9.3px;background:#0d0d0d;"></div>
<svg class="a" style="left:702.5px;top:255.24999999999997px" width="2" height="2.8" viewBox="0 0 2 2.8"><path d="M0 0L1.9 1.4 0 2.8z" fill="#d8d8d8"/></svg>
<div class="t" style="left:704.80px;top:254px;font-size:6.2px;color:#f2f2f2;transform:scaleX(0.920);transform-origin:0 50%;">0.5</div>
<div class="t" style="left:762.90px;top:244px;font-size:5.0px;color:#1e1e1e;transform:scaleX(0.860);transform-origin:0 50%;">Reson gain</div>
<div class="a " style="left:761.4px;top:252px;width:36.1px;height:9.3px;background:#0d0d0d;"></div>
<svg class="a" style="left:762.6999999999999px;top:255.24999999999997px" width="2" height="2.8" viewBox="0 0 2 2.8"><path d="M0 0L1.9 1.4 0 2.8z" fill="#d8d8d8"/></svg>
<div class="t" style="left:765.00px;top:254px;font-size:6.2px;color:#f2f2f2;transform:scaleX(0.920);transform-origin:0 50%;">0.5</div>
<div class="t" style="left:612.75px;top:270px;font-size:7.0px;color:#1a1a1a;transform:scaleX(0.833);transform-origin:0 50%;">live.gain~[4]</div>
<div class="a " style="left:577.6px;top:277.4px;width:101.4px;height:4.2px;background:#2a2a2a;"></div>
<div class="a " style="left:577.9px;top:278.9px;width:100.80000000000001px;height:1.0px;background:#9a9a9a;"></div>
<svg class="a" style="left:671.5px;top:281.59999999999997px" width="4.4" height="3" viewBox="0 0 4.4 3"><path d="M2.2 0.2L4 2.8H0.4z" fill="#c9cfd0" stroke="#666" stroke-width="0.5"/></svg>
<div class="a " style="left:673.2px;top:277.2px;width:1px;height:4.6px;background:#d0d0d0;"></div>
<div class="t" style="left:578.90px;top:286px;font-size:6.6px;color:#1e1e1e;transform:scaleX(0.860);transform-origin:0 50%;">0.0 dB</div>
<div class="a " style="left:692.8px;top:274.7px;width:66.4px;height:7.8px;background:#121212;border:1.2px solid #f7901e;border-width:1.2px 0;box-sizing:border-box;"></div>
<div class="t" style="left:693.60px;top:278px;font-size:4.8px;color:#f7901e;transform:scaleX(0.906);transform-origin:0 50%;">p del_map</div>
<div class="t" style="left:762.00px;top:270px;font-size:7px;color:#1e1e1e;transform:scaleX(0.840);transform-origin:0 50%;">Dry/wet effect_sp2</div>
<svg class="a" style="left:779.3px;top:277.4px" width="14.0" height="14.0" viewBox="-7.0 -7.0 14.0 14.0"><path d="M-3.72 4.68A6.0 6.0 0 1 1 3.72 4.68" fill="none" stroke="#1e1e1e" stroke-width="0.9"/><path d="M-0.60 0.30L-3.72 4.68" stroke="#1e1e1e" stroke-width="0.9"/></svg>
<div class="t" style="left:784.58px;top:292px;font-size:6.2px;color:#1e1e1e;">0</div>
<div class="a " style="left:332px;top:60px;width:176px;height:17.7px;background:linear-gradient(#1c1c1c,#0e0e0e);border-radius:2.5px;"></div>
<div class="t" style="left:333.50px;top:62px;font-size:13.6px;color:#ff8c16;transform:scaleX(0.848);transform-origin:0 50%;-webkit-text-stroke:0.45px currentColor;">CONCRETE MOTION - STEREO</div>
<div class="a " style="left:272.9px;top:81.4px;width:143.2px;height:97.2px;background:#aab2b9;border:1px solid #5a636a;border-radius:3.2px;box-sizing:border-box;box-shadow:inset 0 0 0 0.6px #bac1c8;"></div>
<div class="a " style="left:276.7px;top:85.30000000000001px;width:49.4px;height:9.6px;background:#f7901e;"></div>
<div class="t" style="left:278.10px;top:87px;font-size:7.8px;color:#1f1408;transform:scaleX(0.791);transform-origin:0 50%;">Sound player 1</div>
<div class="a " style="left:331.0px;top:85.9px;width:30.8px;height:8.1px;background:#121212;border:1.1px solid #f7901e;border-width:1.1px 0;box-sizing:border-box;"></div>
<div class="t" style="left:332.30px;top:89px;font-size:4.8px;color:#f7901e;transform:scaleX(0.847);transform-origin:0 50%;">p SP_1_map</div>
<div class="a " style="left:277.7px;top:98.80000000000001px;width:18.9px;height:6.8px;background:#9ca8b3;border-radius:3.2px;"></div>
<div class="t" style="left:280.40px;top:100px;font-size:5.8px;color:#1a1a1a;font-weight:bold;transform:scaleX(0.762);transform-origin:0 50%;">Folder</div>
<div class="t" style="left:299.70px;top:99px;font-size:6.0px;color:#1a1a1a;font-weight:bold;transform:scaleX(0.827);transform-origin:0 50%;">File:</div>
<div class="a " style="left:317.29999999999995px;top:97.7px;width:78.6px;height:8.5px;background:#f3f3f3;border-radius:1px;"></div>
<div class="t" style="left:319.50px;top:100px;font-size:6.4px;color:#111;transform:scaleX(0.774);transform-origin:0 50%;">Applausi interno folla media...</div>
<svg class="a" style="left:390.4px;top:101.0px" width="3.4" height="2.2" viewBox="0 0 3.4 2.2"><path d="M0 0h3.4L1.7 2.2z" fill="#333"/></svg>
<svg class="a" style="left:277.09999999999997px;top:108.7px;border-radius:3px;background:#1b1e21" width="118.8" height="54.5" viewBox="0 0 118.8 54.5"><path d="M1.5 11.2 L2.0 10.9 L2.4 10.2 L2.9 10.2 L3.3 7.4 L3.8 7.1 L4.2 7.7 L4.7 6.1 L5.1 5.7 L5.6 4.0 L6.0 6.5 L6.5 4.6 L6.9 3.9 L7.4 4.0 L7.8 7.9 L8.3 7.7 L8.7 7.5 L9.2 4.3 L9.6 7.0 L10.1 7.5 L10.5 3.7 L11.0 6.9 L11.4 7.6 L11.9 4.4 L12.3 7.7 L12.8 6.1 L13.2 5.3 L13.7 4.1 L14.1 4.7 L14.6 4.3 L15.0 8.4 L15.5 6.9 L15.9 7.4 L16.4 5.7 L16.8 4.5 L17.3 3.7 L17.7 5.8 L18.2 4.6 L18.6 6.1 L19.1 5.6 L19.5 6.4 L20.0 8.4 L20.4 5.7 L20.9 7.1 L21.3 6.9 L21.8 6.2 L22.2 8.5 L22.7 6.0 L23.1 6.9 L23.6 9.0 L24.0 6.2 L24.5 5.9 L24.9 8.0 L25.4 7.1 L25.8 8.1 L26.3 5.8 L26.7 8.4 L27.2 6.3 L27.6 7.1 L28.1 6.5 L28.5 5.6 L29.0 3.1 L29.4 7.6 L29.9 4.8 L30.3 6.7 L30.8 6.4 L31.2 6.2 L31.7 9.2 L32.1 7.5 L32.6 6.2 L33.0 2.4 L33.5 8.1 L33.9 6.9 L34.4 5.0 L34.8 5.6 L35.3 7.5 L35.7 6.0 L36.2 4.9 L36.6 5.9 L37.1 1.8 L37.5 6.6 L38.0 5.8 L38.4 4.3 L38.9 7.1 L39.3 5.2 L39.8 6.5 L40.2 7.0 L40.7 5.3 L41.1 2.1 L41.6 6.0 L42.0 1.6 L42.5 4.0 L42.9 7.6 L43.4 6.0 L43.8 4.8 L44.3 7.8 L44.7 7.3 L45.2 8.6 L45.6 7.5 L46.1 7.9 L46.5 8.0 L47.0 8.0 L47.4 8.4 L47.9 9.9 L48.3 10.1 L48.8 9.6 L49.2 10.2 L49.7 10.1 L50.1 10.4 L50.1 13.2 L49.7 13.7 L49.2 12.7 L48.8 14.0 L48.3 14.3 L47.9 14.8 L47.4 14.2 L47.0 15.4 L46.5 16.0 L46.1 14.8 L45.6 15.7 L45.2 15.5 L44.7 15.1 L44.3 17.7 L43.8 21.3 L43.4 16.2 L42.9 19.0 L42.5 16.9 L42.0 18.2 L41.6 18.3 L41.1 19.7 L40.7 18.1 L40.2 19.6 L39.8 19.2 L39.3 19.1 L38.9 16.9 L38.4 22.7 L38.0 18.9 L37.5 15.9 L37.1 18.6 L36.6 20.1 L36.2 15.4 L35.7 16.7 L35.3 18.9 L34.8 17.8 L34.4 17.7 L33.9 18.4 L33.5 17.5 L33.0 18.4 L32.6 16.6 L32.1 17.6 L31.7 17.6 L31.2 16.8 L30.8 17.7 L30.3 17.2 L29.9 17.7 L29.4 14.4 L29.0 17.3 L28.5 16.2 L28.1 16.0 L27.6 15.6 L27.2 15.9 L26.7 17.6 L26.3 16.9 L25.8 17.6 L25.4 16.1 L24.9 17.9 L24.5 16.0 L24.0 17.1 L23.6 16.8 L23.1 15.0 L22.7 17.6 L22.2 18.4 L21.8 17.3 L21.3 18.2 L20.9 18.3 L20.4 18.1 L20.0 18.0 L19.5 16.6 L19.1 14.7 L18.6 14.7 L18.2 18.1 L17.7 17.0 L17.3 16.1 L16.8 14.8 L16.4 18.1 L15.9 15.5 L15.5 18.2 L15.0 16.7 L14.6 17.6 L14.1 16.5 L13.7 16.8 L13.2 16.5 L12.8 19.7 L12.3 16.9 L11.9 19.6 L11.4 16.7 L11.0 19.5 L10.5 17.3 L10.1 16.8 L9.6 16.2 L9.2 18.4 L8.7 17.9 L8.3 19.8 L7.8 19.1 L7.4 19.8 L6.9 14.7 L6.5 19.3 L6.0 19.4 L5.6 19.1 L5.1 17.7 L4.7 17.8 L4.2 14.7 L3.8 18.4 L3.3 15.6 L2.9 15.7 L2.4 12.8 L2.0 12.4 L1.5 12.6Z" fill="#5ef06a"/><path d="M1.5 37.2 L2.0 36.9 L2.4 36.6 L2.9 35.5 L3.3 35.5 L3.8 35.1 L4.2 34.6 L4.7 34.2 L5.1 33.2 L5.6 34.7 L6.0 32.7 L6.5 32.7 L6.9 34.8 L7.4 33.7 L7.8 34.8 L8.3 32.8 L8.7 32.9 L9.2 33.2 L9.6 32.2 L10.1 33.5 L10.5 34.5 L11.0 34.6 L11.4 33.0 L11.9 32.8 L12.3 33.4 L12.8 33.5 L13.2 33.5 L13.7 34.4 L14.1 32.2 L14.6 32.5 L15.0 32.1 L15.5 32.7 L15.9 30.9 L16.4 32.1 L16.8 33.2 L17.3 32.1 L17.7 34.0 L18.2 32.8 L18.6 32.4 L19.1 31.1 L19.5 32.2 L20.0 34.8 L20.4 33.2 L20.9 32.7 L21.3 32.1 L21.8 33.5 L22.2 33.9 L22.7 35.3 L23.1 35.3 L23.6 33.9 L24.0 32.2 L24.5 33.1 L24.9 33.8 L25.4 32.0 L25.8 31.6 L26.3 32.0 L26.7 32.0 L27.2 33.9 L27.6 33.4 L28.1 31.4 L28.5 31.0 L29.0 31.3 L29.4 31.1 L29.9 31.2 L30.3 32.6 L30.8 33.4 L31.2 33.5 L31.7 31.2 L32.1 31.3 L32.6 31.8 L33.0 33.0 L33.5 32.3 L33.9 32.0 L34.4 33.1 L34.8 32.6 L35.3 30.3 L35.7 31.0 L36.2 30.1 L36.6 28.1 L37.1 30.5 L37.5 30.9 L38.0 30.4 L38.4 30.5 L38.9 30.6 L39.3 31.3 L39.8 31.0 L40.2 31.3 L40.7 30.9 L41.1 30.1 L41.6 30.5 L42.0 32.9 L42.5 32.0 L42.9 27.3 L43.4 30.3 L43.8 28.5 L44.3 32.1 L44.7 31.1 L45.2 31.7 L45.6 34.2 L46.1 31.3 L46.5 33.3 L47.0 34.1 L47.4 35.7 L47.9 35.4 L48.3 34.9 L48.8 36.1 L49.2 36.3 L49.7 36.9 L50.1 36.1 L50.1 39.4 L49.7 39.5 L49.2 39.2 L48.8 40.1 L48.3 40.5 L47.9 40.2 L47.4 39.4 L47.0 41.7 L46.5 42.0 L46.1 40.4 L45.6 41.7 L45.2 40.5 L44.7 42.3 L44.3 44.3 L43.8 41.7 L43.4 42.0 L42.9 41.6 L42.5 44.8 L42.0 45.9 L41.6 42.9 L41.1 45.0 L40.7 44.7 L40.2 42.2 L39.8 43.2 L39.3 44.8 L38.9 42.5 L38.4 44.0 L38.0 45.4 L37.5 45.1 L37.1 41.4 L36.6 44.7 L36.2 43.8 L35.7 42.4 L35.3 42.2 L34.8 45.1 L34.4 42.1 L33.9 44.7 L33.5 43.6 L33.0 42.2 L32.6 44.4 L32.1 43.9 L31.7 41.0 L31.2 41.5 L30.8 41.6 L30.3 44.4 L29.9 41.5 L29.4 44.3 L29.0 44.6 L28.5 45.8 L28.1 42.9 L27.6 43.7 L27.2 42.0 L26.7 43.1 L26.3 40.3 L25.8 41.5 L25.4 41.4 L24.9 40.1 L24.5 41.6 L24.0 42.6 L23.6 42.3 L23.1 43.3 L22.7 42.8 L22.2 40.9 L21.8 42.8 L21.3 46.0 L20.9 40.1 L20.4 42.9 L20.0 42.3 L19.5 41.0 L19.1 42.7 L18.6 43.0 L18.2 40.7 L17.7 41.0 L17.3 40.3 L16.8 46.0 L16.4 41.8 L15.9 41.6 L15.5 40.8 L15.0 40.5 L14.6 43.4 L14.1 43.0 L13.7 43.3 L13.2 43.2 L12.8 42.5 L12.3 42.9 L11.9 42.2 L11.4 41.0 L11.0 44.3 L10.5 43.1 L10.1 41.8 L9.6 43.0 L9.2 40.8 L8.7 43.0 L8.3 41.1 L7.8 42.4 L7.4 43.0 L6.9 42.4 L6.5 41.9 L6.0 40.9 L5.6 43.3 L5.1 42.4 L4.7 42.2 L4.2 39.7 L3.8 41.9 L3.3 40.8 L2.9 40.1 L2.4 39.1 L2.0 38.5 L1.5 38.2Z" fill="#5ef06a"/><path d="M58.9 11.2 L59.4 11.3 L59.8 11.4 L60.3 11.4 L60.7 11.2 L61.2 10.9 L61.6 10.7 L62.1 10.8 L62.5 10.7 L63.0 10.4 L63.4 10.1 L63.9 10.9 L64.3 10.3 L64.8 9.6 L65.2 9.3 L65.7 9.5 L66.1 10.0 L66.6 10.4 L67.0 8.4 L67.5 8.3 L67.9 8.3 L68.4 7.6 L68.8 8.2 L69.3 8.8 L69.7 8.4 L70.2 7.4 L70.6 7.4 L71.1 7.0 L71.5 9.0 L72.0 6.7 L72.4 7.3 L72.9 7.5 L73.3 7.8 L73.8 8.4 L74.2 5.8 L74.7 6.9 L75.1 8.1 L75.6 6.5 L76.0 7.1 L76.5 8.1 L76.9 7.7 L77.4 8.2 L77.8 8.2 L78.3 7.5 L78.7 6.5 L79.2 6.2 L79.6 8.2 L80.1 9.0 L80.5 6.4 L81.0 8.6 L81.4 9.5 L81.9 7.5 L82.3 6.6 L82.8 7.4 L83.2 7.7 L83.7 6.5 L84.1 6.8 L84.6 6.2 L85.0 6.7 L85.5 6.8 L85.9 5.9 L86.4 6.6 L86.8 8.0 L87.3 6.6 L87.7 7.1 L88.2 6.2 L88.6 6.6 L89.1 9.4 L89.5 6.9 L90.0 5.1 L90.4 7.3 L90.9 8.7 L91.3 6.8 L91.8 7.9 L92.2 7.5 L92.7 3.8 L93.1 6.4 L93.6 7.0 L94.0 8.9 L94.5 6.7 L94.9 7.4 L95.4 7.0 L95.8 4.6 L96.3 6.9 L96.7 3.8 L97.2 7.3 L97.6 8.8 L98.1 7.5 L98.5 9.2 L99.0 6.9 L99.4 8.9 L99.9 7.6 L100.3 7.9 L100.8 7.3 L101.2 7.4 L101.7 9.3 L102.1 8.3 L102.6 9.1 L103.0 9.4 L103.5 8.4 L103.9 9.6 L104.4 7.7 L104.8 8.6 L105.3 10.0 L105.7 9.4 L106.2 10.0 L106.6 9.0 L107.1 9.3 L107.5 9.1 L108.0 10.1 L108.4 9.8 L108.9 10.1 L109.3 10.3 L109.8 9.9 L110.2 10.0 L110.7 10.6 L111.1 10.1 L111.6 11.0 L112.0 10.4 L112.5 10.4 L112.9 10.6 L113.4 10.1 L113.8 10.7 L114.3 11.2 L114.7 11.2 L115.2 10.8 L115.2 12.8 L114.7 12.6 L114.3 12.9 L113.8 12.4 L113.4 12.7 L112.9 12.9 L112.5 13.0 L112.0 13.1 L111.6 13.2 L111.1 13.4 L110.7 13.3 L110.2 13.4 L109.8 13.4 L109.3 12.6 L108.9 13.7 L108.4 13.8 L108.0 13.8 L107.5 14.4 L107.1 14.2 L106.6 14.4 L106.2 16.3 L105.7 14.2 L105.3 14.5 L104.8 15.1 L104.4 15.5 L103.9 15.1 L103.5 15.5 L103.0 15.7 L102.6 16.0 L102.1 17.7 L101.7 15.0 L101.2 16.5 L100.8 14.9 L100.3 15.9 L99.9 15.8 L99.4 16.1 L99.0 16.7 L98.5 16.4 L98.1 15.8 L97.6 15.6 L97.2 16.9 L96.7 16.9 L96.3 16.6 L95.8 17.0 L95.4 15.1 L94.9 16.4 L94.5 17.3 L94.0 15.8 L93.6 17.2 L93.1 16.7 L92.7 16.9 L92.2 16.9 L91.8 15.4 L91.3 16.3 L90.9 15.6 L90.4 14.5 L90.0 16.4 L89.5 15.4 L89.1 17.3 L88.6 17.6 L88.2 17.8 L87.7 16.5 L87.3 17.3 L86.8 16.0 L86.4 15.9 L85.9 15.6 L85.5 16.3 L85.0 14.3 L84.6 14.8 L84.1 15.6 L83.7 15.7 L83.2 16.5 L82.8 17.1 L82.3 16.4 L81.9 16.4 L81.4 14.9 L81.0 17.2 L80.5 17.2 L80.1 15.8 L79.6 14.9 L79.2 14.3 L78.7 17.1 L78.3 16.3 L77.8 16.2 L77.4 14.6 L76.9 16.1 L76.5 15.7 L76.0 15.6 L75.6 16.9 L75.1 14.6 L74.7 16.3 L74.2 16.7 L73.8 15.0 L73.3 14.9 L72.9 19.0 L72.4 15.3 L72.0 19.6 L71.5 15.5 L71.1 16.1 L70.6 15.2 L70.2 16.2 L69.7 16.3 L69.3 16.3 L68.8 15.4 L68.4 14.4 L67.9 14.9 L67.5 15.6 L67.0 14.7 L66.6 14.8 L66.1 13.3 L65.7 14.2 L65.2 14.3 L64.8 13.4 L64.3 13.3 L63.9 13.4 L63.4 13.2 L63.0 12.7 L62.5 13.0 L62.1 13.0 L61.6 12.8 L61.2 12.6 L60.7 12.6 L60.3 12.4 L59.8 12.2 L59.4 12.3 L58.9 12.6Z" fill="#5ef06a"/><path d="M58.9 37.2 L59.4 37.3 L59.8 37.1 L60.3 37.1 L60.7 37.1 L61.2 36.8 L61.6 36.9 L62.1 36.9 L62.5 37.0 L63.0 37.1 L63.4 36.7 L63.9 36.8 L64.3 36.1 L64.8 36.0 L65.2 36.5 L65.7 35.9 L66.1 36.3 L66.6 35.6 L67.0 35.6 L67.5 35.3 L67.9 34.9 L68.4 36.1 L68.8 35.7 L69.3 36.2 L69.7 35.0 L70.2 35.7 L70.6 34.0 L71.1 34.7 L71.5 34.8 L72.0 34.2 L72.4 34.4 L72.9 34.1 L73.3 35.3 L73.8 35.3 L74.2 33.6 L74.7 33.5 L75.1 35.0 L75.6 35.1 L76.0 33.6 L76.5 34.5 L76.9 33.3 L77.4 33.2 L77.8 35.3 L78.3 33.1 L78.7 35.1 L79.2 33.3 L79.6 33.3 L80.1 33.4 L80.5 35.2 L81.0 33.5 L81.4 35.5 L81.9 33.6 L82.3 34.1 L82.8 35.4 L83.2 33.8 L83.7 33.7 L84.1 34.0 L84.6 33.5 L85.0 34.7 L85.5 35.0 L85.9 33.7 L86.4 33.7 L86.8 35.2 L87.3 31.4 L87.7 35.2 L88.2 33.3 L88.6 34.9 L89.1 33.3 L89.5 33.5 L90.0 34.4 L90.4 32.0 L90.9 34.5 L91.3 33.5 L91.8 34.0 L92.2 33.8 L92.7 35.1 L93.1 34.2 L93.6 33.9 L94.0 35.7 L94.5 32.6 L94.9 34.6 L95.4 34.6 L95.8 33.4 L96.3 33.4 L96.7 34.3 L97.2 34.5 L97.6 33.7 L98.1 33.9 L98.5 35.5 L99.0 32.1 L99.4 35.7 L99.9 34.8 L100.3 35.5 L100.8 34.9 L101.2 35.9 L101.7 33.2 L102.1 33.3 L102.6 34.8 L103.0 34.5 L103.5 34.9 L103.9 35.9 L104.4 34.8 L104.8 35.6 L105.3 35.4 L105.7 34.2 L106.2 35.9 L106.6 36.7 L107.1 36.5 L107.5 35.9 L108.0 35.8 L108.4 36.6 L108.9 36.0 L109.3 36.8 L109.8 36.2 L110.2 36.2 L110.7 36.7 L111.1 36.4 L111.6 35.9 L112.0 37.1 L112.5 36.9 L112.9 36.6 L113.4 36.8 L113.8 36.8 L114.3 36.9 L114.7 37.1 L115.2 36.8 L115.2 38.6 L114.7 38.1 L114.3 38.5 L113.8 38.5 L113.4 38.8 L112.9 38.8 L112.5 38.6 L112.0 38.8 L111.6 38.6 L111.1 39.0 L110.7 38.9 L110.2 38.9 L109.8 38.9 L109.3 39.1 L108.9 39.5 L108.4 39.3 L108.0 39.4 L107.5 39.5 L107.1 38.5 L106.6 40.0 L106.2 40.0 L105.7 40.2 L105.3 41.5 L104.8 39.1 L104.4 39.7 L103.9 39.5 L103.5 40.5 L103.0 39.3 L102.6 40.8 L102.1 40.3 L101.7 39.9 L101.2 39.5 L100.8 40.6 L100.3 40.8 L99.9 39.5 L99.4 40.1 L99.0 41.7 L98.5 40.7 L98.1 41.6 L97.6 40.9 L97.2 41.1 L96.7 41.4 L96.3 41.9 L95.8 41.9 L95.4 40.2 L94.9 41.0 L94.5 40.4 L94.0 40.7 L93.6 41.4 L93.1 44.3 L92.7 39.5 L92.2 41.8 L91.8 41.7 L91.3 39.8 L90.9 41.4 L90.4 41.4 L90.0 42.2 L89.5 42.0 L89.1 42.3 L88.6 41.0 L88.2 42.3 L87.7 40.8 L87.3 39.8 L86.8 42.3 L86.4 40.0 L85.9 41.7 L85.5 42.2 L85.0 39.7 L84.6 42.4 L84.1 41.2 L83.7 41.4 L83.2 44.5 L82.8 41.2 L82.3 40.2 L81.9 40.2 L81.4 41.5 L81.0 41.5 L80.5 40.8 L80.1 43.5 L79.6 42.9 L79.2 41.5 L78.7 44.0 L78.3 42.2 L77.8 41.1 L77.4 42.0 L76.9 42.1 L76.5 41.2 L76.0 40.4 L75.6 41.7 L75.1 41.9 L74.7 40.9 L74.2 41.9 L73.8 43.0 L73.3 41.7 L72.9 40.5 L72.4 41.1 L72.0 40.6 L71.5 41.4 L71.1 40.6 L70.6 40.0 L70.2 41.5 L69.7 40.0 L69.3 39.0 L68.8 40.6 L68.4 39.0 L67.9 39.7 L67.5 39.8 L67.0 40.0 L66.6 39.6 L66.1 39.3 L65.7 39.3 L65.2 39.4 L64.8 39.1 L64.3 38.5 L63.9 38.8 L63.4 38.6 L63.0 38.5 L62.5 38.7 L62.1 38.2 L61.6 38.4 L61.2 38.0 L60.7 38.4 L60.3 38.1 L59.8 38.3 L59.4 38.1 L58.9 38.0Z" fill="#5ef06a"/></svg>
<div class="t" style="left:386.10px;top:111px;font-size:5.6px;color:#f0f0f0;font-weight:bold;">N</div>
<div class="t" style="left:361.90px;top:156px;font-size:5.8px;color:#f0f0f0;transform:scaleX(0.860);transform-origin:0 50%;">Zm</div>
<div class="t" style="left:373.90px;top:156px;font-size:5.8px;color:#f0f0f0;transform:scaleX(0.860);transform-origin:0 50%;">100</div>
<div class="t" style="left:387.90px;top:157px;font-size:5.8px;color:#f0f0f0;transform:scaleX(0.860);transform-origin:0 50%;">%</div>
<div class="t" style="left:399.45px;top:98px;font-size:6px;color:#1a1a1a;transform:scaleX(0.860);transform-origin:0 50%;">Gain</div>
<div class="a " style="left:403.0px;top:104.7px;width:4.2px;height:50.3px;background:#454545;border:0.6px solid #6d7377;box-sizing:border-box;"></div>
<div class="a " style="left:404.29999999999995px;top:106.0px;width:1.6px;height:47.6px;background:#2a2a2a;"></div>
<div class="a " style="left:403.29999999999995px;top:109.60000000000001px;width:3.6px;height:0.8px;background:#9a9a9a;"></div>
<svg class="a" style="left:407.5px;top:107.80000000000001px" width="3" height="3.6" viewBox="0 0 3 3.6"><path d="M0 1.8L3 0v3.6z" fill="#d0d4d6"/></svg>
<div class="t" style="left:397.49px;top:157px;font-size:6.2px;color:#1a1a1a;transform:scaleX(0.860);transform-origin:0 50%;">0.0 dB</div>
<div class="a " style="left:277.29999999999995px;top:166.5px;width:19.1px;height:7.3px;background:#b7bdc0;border:0.7px solid #858c90;box-sizing:border-box;"></div>
<div class="t" style="left:282.05px;top:168px;font-size:5.8px;color:#1a1a1a;transform:scaleX(0.860);transform-origin:0 50%;">Play</div>
<div class="a " style="left:298.7px;top:166.5px;width:19.2px;height:7.3px;background:#aab1b5;border:0.9px solid #50565b;box-sizing:border-box;"></div>
<div class="t" style="left:302.75px;top:168px;font-size:5.8px;color:#1a1a1a;transform:scaleX(0.860);transform-origin:0 50%;">Loop</div>
<div class="t" style="left:321.30px;top:168px;font-size:6.2px;color:#1a1a1a;transform:scaleX(0.844);transform-origin:0 50%;">Transp</div>
<div class="a " style="left:341.29999999999995px;top:166.5px;width:18.2px;height:6.3px;background:#d9dee1;border:0.6px solid #9aa0a4;box-sizing:border-box;"></div>
<div class="t" style="left:345.55px;top:168px;font-size:5.8px;color:#222;transform:scaleX(0.860);transform-origin:0 50%;">0.00</div>
<div class="t" style="left:363.30px;top:169px;font-size:5.8px;color:#222;transform:scaleX(0.860);transform-origin:0 50%;">ct</div>
<div class="t" style="left:372.90px;top:169px;font-size:5.6px;color:#4c5863;transform:scaleX(0.903);transform-origin:0 50%;">0 : 0 : 0 : 0</div>
<div class="a " style="left:422.5px;top:81.4px;width:143.2px;height:97.2px;background:#aab2b9;border:1px solid #5a636a;border-radius:3.2px;box-sizing:border-box;box-shadow:inset 0 0 0 0.6px #bac1c8;"></div>
<div class="a " style="left:426.3px;top:85.30000000000001px;width:49.4px;height:9.6px;background:#f7901e;"></div>
<div class="t" style="left:427.70px;top:87px;font-size:7.8px;color:#1f1408;transform:scaleX(0.791);transform-origin:0 50%;">Sound player 2</div>
<div class="a " style="left:480.6px;top:85.9px;width:30.8px;height:8.1px;background:#121212;border:1.1px solid #f7901e;border-width:1.1px 0;box-sizing:border-box;"></div>
<div class="t" style="left:481.90px;top:89px;font-size:4.8px;color:#f7901e;transform:scaleX(0.847);transform-origin:0 50%;">p SP_2_map</div>
<div class="a " style="left:427.3px;top:98.80000000000001px;width:18.9px;height:6.8px;background:#9ca8b3;border-radius:3.2px;"></div>
<div class="t" style="left:430.00px;top:100px;font-size:5.8px;color:#1a1a1a;font-weight:bold;transform:scaleX(0.762);transform-origin:0 50%;">Folder</div>
<div class="t" style="left:449.30px;top:99px;font-size:6.0px;color:#1a1a1a;font-weight:bold;transform:scaleX(0.827);transform-origin:0 50%;">File:</div>
<div class="a " style="left:466.9px;top:97.7px;width:78.6px;height:8.5px;background:#f3f3f3;border-radius:1px;"></div>
<div class="t" style="left:469.10px;top:100px;font-size:6.4px;color:#111;transform:scaleX(0.768);transform-origin:0 50%;">Gabbiani grande stormo_Lo...</div>
<svg class="a" style="left:540.0px;top:101.0px" width="3.4" height="2.2" viewBox="0 0 3.4 2.2"><path d="M0 0h3.4L1.7 2.2z" fill="#333"/></svg>
<svg class="a" style="left:426.7px;top:108.7px;border-radius:3px;background:#1b1e21" width="118.8" height="54.5" viewBox="0 0 118.8 54.5"><path d="M1.1 10.0 L1.6 9.8 L2.0 9.6 L2.5 9.5 L2.9 9.6 L3.4 10.6 L3.8 9.5 L4.3 10.5 L4.7 9.6 L5.2 9.7 L5.6 9.5 L6.1 10.0 L6.5 10.8 L7.0 10.0 L7.4 9.7 L7.9 10.7 L8.3 10.5 L8.8 9.7 L9.2 9.5 L9.7 9.6 L10.1 9.2 L10.6 9.7 L11.0 9.0 L11.5 9.1 L11.9 7.1 L12.4 10.0 L12.8 10.5 L13.3 9.8 L13.7 8.4 L14.2 9.7 L14.6 9.6 L15.1 9.7 L15.5 9.4 L16.0 9.7 L16.4 9.7 L16.9 10.2 L17.3 10.3 L17.8 9.4 L18.2 9.4 L18.7 9.9 L19.1 9.7 L19.6 8.7 L20.0 10.3 L20.5 9.2 L20.9 9.8 L21.4 9.8 L21.8 9.9 L22.3 9.9 L22.7 10.6 L23.2 9.6 L23.6 10.0 L24.1 9.7 L24.5 9.4 L24.9 9.4 L25.4 9.4 L25.8 9.5 L26.3 9.4 L26.7 9.9 L27.2 10.2 L27.6 9.5 L28.1 9.7 L28.5 9.5 L29.0 10.1 L29.4 10.8 L29.9 10.0 L30.3 10.7 L30.8 10.2 L31.2 8.0 L31.7 7.4 L32.1 6.5 L32.6 7.7 L33.0 10.4 L33.5 9.9 L34.0 8.8 L34.4 9.4 L34.9 10.0 L35.3 9.8 L35.8 10.3 L36.2 9.0 L36.7 8.4 L37.1 9.5 L37.6 9.3 L38.0 9.0 L38.5 9.5 L38.9 10.0 L39.4 9.4 L39.8 9.8 L40.3 9.5 L40.7 9.4 L41.2 9.7 L41.6 8.3 L42.1 9.9 L42.5 10.1 L43.0 9.8 L43.4 9.6 L43.9 9.8 L44.3 10.0 L44.8 9.9 L45.2 9.3 L45.7 10.2 L46.1 10.1 L46.6 8.7 L47.0 9.2 L47.5 9.9 L47.9 9.9 L48.4 9.9 L48.8 10.7 L49.3 8.8 L49.7 10.1 L50.2 10.6 L50.6 10.0 L51.1 10.8 L51.5 9.3 L52.0 10.5 L52.4 9.7 L52.9 9.4 L53.3 9.5 L53.8 10.8 L54.2 9.4 L54.7 9.5 L55.1 10.2 L55.6 9.9 L56.0 10.1 L56.5 9.6 L56.9 9.7 L57.4 7.9 L57.8 5.0 L58.3 7.3 L58.7 4.1 L59.2 3.6 L59.6 8.4 L60.1 10.1 L60.5 10.0 L61.0 9.4 L61.4 9.5 L61.9 8.8 L62.3 10.2 L62.8 9.7 L63.2 8.8 L63.7 8.6 L64.1 8.9 L64.6 9.6 L65.0 9.4 L65.5 9.8 L65.9 9.6 L66.4 9.7 L66.8 9.6 L67.3 10.5 L67.7 10.6 L68.2 9.4 L68.6 10.5 L69.1 10.4 L69.5 9.8 L70.0 9.6 L70.4 10.2 L70.9 9.5 L71.3 7.6 L71.8 8.1 L72.2 9.1 L72.7 8.3 L73.1 9.1 L73.6 9.9 L74.0 10.1 L74.5 9.4 L74.9 9.3 L75.4 9.5 L75.8 10.4 L76.3 9.5 L76.7 10.0 L77.2 9.3 L77.6 10.2 L78.1 10.1 L78.5 10.2 L79.0 9.5 L79.4 9.7 L79.9 9.4 L80.3 10.5 L80.8 9.5 L81.2 10.2 L81.7 10.4 L82.1 10.5 L82.6 9.4 L83.0 9.9 L83.5 9.8 L83.9 9.9 L84.4 10.0 L84.8 9.7 L85.3 10.3 L85.7 9.7 L86.2 9.4 L86.6 10.0 L87.1 10.0 L87.5 10.3 L88.0 9.9 L88.4 9.6 L88.9 10.5 L89.3 10.3 L89.8 9.3 L90.2 9.5 L90.7 9.5 L91.1 10.1 L91.6 9.9 L92.0 8.4 L92.5 7.0 L92.9 8.7 L93.4 9.6 L93.8 10.1 L94.3 9.4 L94.7 10.2 L95.2 9.4 L95.6 9.3 L96.1 10.1 L96.5 10.0 L97.0 9.4 L97.4 9.6 L97.9 9.8 L98.3 9.6 L98.8 10.0 L99.2 10.6 L99.7 9.6 L100.1 10.4 L100.6 10.3 L101.0 9.8 L101.5 8.4 L101.9 10.1 L102.4 9.9 L102.8 9.4 L103.3 9.3 L103.7 7.6 L104.2 9.3 L104.6 8.6 L105.1 9.6 L105.5 10.6 L106.0 10.0 L106.4 10.1 L106.9 9.3 L107.3 10.1 L107.8 10.1 L108.2 10.2 L108.7 10.3 L109.1 9.9 L109.6 9.9 L110.0 10.6 L110.5 10.4 L110.9 10.3 L111.4 9.6 L111.8 9.9 L112.3 9.9 L112.7 10.1 L113.2 8.4 L113.6 10.5 L114.1 10.1 L114.5 9.4 L115.0 9.9 L115.4 10.9 L115.4 14.3 L115.0 14.1 L114.5 13.0 L114.1 13.8 L113.6 14.2 L113.2 14.1 L112.7 13.9 L112.3 13.4 L111.8 14.1 L111.4 13.9 L110.9 14.0 L110.5 13.4 L110.0 13.9 L109.6 13.9 L109.1 13.1 L108.7 13.0 L108.2 15.1 L107.8 13.7 L107.3 13.9 L106.9 13.9 L106.4 13.7 L106.0 13.0 L105.5 13.2 L105.1 13.5 L104.6 15.0 L104.2 14.0 L103.7 15.0 L103.3 13.8 L102.8 13.9 L102.4 15.4 L101.9 13.8 L101.5 13.9 L101.0 14.1 L100.6 13.6 L100.1 13.7 L99.7 13.8 L99.2 13.7 L98.8 13.3 L98.3 13.7 L97.9 13.7 L97.4 14.9 L97.0 14.1 L96.5 14.3 L96.1 13.3 L95.6 13.9 L95.2 14.1 L94.7 14.2 L94.3 13.9 L93.8 13.2 L93.4 16.0 L92.9 16.7 L92.5 15.2 L92.0 15.4 L91.6 15.6 L91.1 14.3 L90.7 14.3 L90.2 13.6 L89.8 13.7 L89.3 12.8 L88.9 13.0 L88.4 13.0 L88.0 13.4 L87.5 14.0 L87.1 14.2 L86.6 13.7 L86.2 13.5 L85.7 13.1 L85.3 13.8 L84.8 13.4 L84.4 13.1 L83.9 13.9 L83.5 15.2 L83.0 14.0 L82.6 13.4 L82.1 13.8 L81.7 13.7 L81.2 14.0 L80.8 15.1 L80.3 13.3 L79.9 14.1 L79.4 14.1 L79.0 13.3 L78.5 12.8 L78.1 13.7 L77.6 14.2 L77.2 12.8 L76.7 13.2 L76.3 13.5 L75.8 15.0 L75.4 14.1 L74.9 13.5 L74.5 14.2 L74.0 13.8 L73.6 12.8 L73.1 14.1 L72.7 15.1 L72.2 16.0 L71.8 14.7 L71.3 14.1 L70.9 14.0 L70.4 13.6 L70.0 14.0 L69.5 13.2 L69.1 14.2 L68.6 13.1 L68.2 13.9 L67.7 14.2 L67.3 13.0 L66.8 13.6 L66.4 12.7 L65.9 13.8 L65.5 13.5 L65.0 14.4 L64.6 14.8 L64.1 15.5 L63.7 15.1 L63.2 13.7 L62.8 14.0 L62.3 14.0 L61.9 13.5 L61.4 14.1 L61.0 13.8 L60.5 13.8 L60.1 14.0 L59.6 14.8 L59.2 16.9 L58.7 17.5 L58.3 20.0 L57.8 19.5 L57.4 15.1 L56.9 14.2 L56.5 14.0 L56.0 12.8 L55.6 14.3 L55.1 13.1 L54.7 14.2 L54.2 14.2 L53.8 13.0 L53.3 15.4 L52.9 14.1 L52.4 13.3 L52.0 13.2 L51.5 13.6 L51.1 14.0 L50.6 14.0 L50.2 12.9 L49.7 13.6 L49.3 13.6 L48.8 14.1 L48.4 13.1 L47.9 14.1 L47.5 14.2 L47.0 13.7 L46.6 13.5 L46.1 13.3 L45.7 13.7 L45.2 14.0 L44.8 13.6 L44.3 15.4 L43.9 13.1 L43.4 14.2 L43.0 13.8 L42.5 13.6 L42.1 13.4 L41.6 15.2 L41.2 14.5 L40.7 15.0 L40.3 13.9 L39.8 14.0 L39.4 13.3 L38.9 13.2 L38.5 13.1 L38.0 13.8 L37.6 14.3 L37.1 14.3 L36.7 14.1 L36.2 13.8 L35.8 13.4 L35.3 14.0 L34.9 14.2 L34.4 13.6 L34.0 14.2 L33.5 12.9 L33.0 14.5 L32.6 16.2 L32.1 16.9 L31.7 17.2 L31.2 15.1 L30.8 13.2 L30.3 13.5 L29.9 13.7 L29.4 13.4 L29.0 13.8 L28.5 14.1 L28.1 13.4 L27.6 13.8 L27.2 14.2 L26.7 14.0 L26.3 13.8 L25.8 13.5 L25.4 14.3 L24.9 14.2 L24.5 14.1 L24.1 14.1 L23.6 14.2 L23.2 15.1 L22.7 14.3 L22.3 13.1 L21.8 14.1 L21.4 13.3 L20.9 14.0 L20.5 13.9 L20.0 15.0 L19.6 15.2 L19.1 14.1 L18.7 14.0 L18.2 12.9 L17.8 13.0 L17.3 13.0 L16.9 13.9 L16.4 14.1 L16.0 14.2 L15.5 13.2 L15.1 14.0 L14.6 13.0 L14.2 13.9 L13.7 13.9 L13.3 14.3 L12.8 13.9 L12.4 13.7 L11.9 14.1 L11.5 13.7 L11.0 15.3 L10.6 14.0 L10.1 13.4 L9.7 13.6 L9.2 13.4 L8.8 13.9 L8.3 13.1 L7.9 14.2 L7.4 13.8 L7.0 13.8 L6.5 13.7 L6.1 13.7 L5.6 13.2 L5.2 13.3 L4.7 13.0 L4.3 13.1 L3.8 14.0 L3.4 12.9 L2.9 13.9 L2.5 13.2 L2.0 14.1 L1.6 13.8 L1.1 13.2Z" fill="#5ef06a"/><path d="M1.1 35.8 L1.6 35.4 L2.0 35.3 L2.5 36.2 L2.9 35.6 L3.4 36.3 L3.8 36.0 L4.3 35.7 L4.7 36.4 L5.2 35.5 L5.6 36.1 L6.1 36.4 L6.5 36.1 L7.0 35.9 L7.4 35.6 L7.9 35.5 L8.3 35.5 L8.8 36.1 L9.2 35.9 L9.7 35.9 L10.1 34.9 L10.6 36.6 L11.0 34.7 L11.5 35.8 L11.9 35.7 L12.4 35.4 L12.8 35.3 L13.3 36.1 L13.7 36.2 L14.2 34.7 L14.6 35.4 L15.1 35.5 L15.5 36.5 L16.0 36.8 L16.4 36.4 L16.9 35.5 L17.3 35.6 L17.8 36.7 L18.2 36.2 L18.7 33.7 L19.1 35.0 L19.6 35.0 L20.0 36.3 L20.5 36.3 L20.9 35.6 L21.4 36.3 L21.8 36.5 L22.3 35.4 L22.7 36.2 L23.2 35.7 L23.6 35.5 L24.1 35.8 L24.5 36.3 L24.9 34.5 L25.4 35.4 L25.8 35.5 L26.3 36.1 L26.7 35.6 L27.2 35.4 L27.6 35.5 L28.1 36.6 L28.5 35.5 L29.0 36.1 L29.4 36.1 L29.9 34.9 L30.3 35.7 L30.8 35.4 L31.2 34.6 L31.7 34.6 L32.1 35.8 L32.6 34.7 L33.0 36.2 L33.5 35.7 L34.0 35.3 L34.4 35.5 L34.9 36.5 L35.3 35.7 L35.8 36.4 L36.2 35.9 L36.7 35.3 L37.1 36.5 L37.6 36.2 L38.0 35.8 L38.5 36.7 L38.9 35.4 L39.4 35.8 L39.8 35.4 L40.3 35.7 L40.7 36.3 L41.2 35.6 L41.6 35.4 L42.1 35.2 L42.5 35.6 L43.0 35.6 L43.4 36.5 L43.9 35.3 L44.3 36.1 L44.8 36.1 L45.2 35.4 L45.7 35.6 L46.1 35.4 L46.6 35.4 L47.0 35.6 L47.5 35.6 L47.9 35.4 L48.4 36.2 L48.8 36.0 L49.3 35.5 L49.7 36.1 L50.2 35.5 L50.6 35.6 L51.1 35.1 L51.5 36.2 L52.0 35.5 L52.4 35.9 L52.9 35.3 L53.3 35.8 L53.8 35.9 L54.2 35.5 L54.7 36.3 L55.1 36.2 L55.6 35.5 L56.0 35.6 L56.5 35.9 L56.9 36.1 L57.4 34.4 L57.8 32.7 L58.3 31.7 L58.7 31.5 L59.2 33.8 L59.6 35.4 L60.1 35.4 L60.5 35.4 L61.0 35.5 L61.4 35.5 L61.9 36.6 L62.3 36.1 L62.8 35.5 L63.2 35.7 L63.7 35.6 L64.1 34.7 L64.6 35.6 L65.0 36.4 L65.5 35.8 L65.9 36.4 L66.4 36.2 L66.8 35.5 L67.3 36.2 L67.7 36.2 L68.2 36.2 L68.6 36.6 L69.1 36.1 L69.5 35.3 L70.0 36.6 L70.4 35.7 L70.9 35.4 L71.3 35.1 L71.8 34.5 L72.2 34.9 L72.7 35.2 L73.1 35.7 L73.6 36.5 L74.0 35.5 L74.5 35.9 L74.9 36.2 L75.4 35.7 L75.8 35.8 L76.3 34.8 L76.7 36.2 L77.2 35.4 L77.6 35.4 L78.1 36.6 L78.5 35.5 L79.0 35.9 L79.4 35.8 L79.9 36.0 L80.3 35.8 L80.8 36.2 L81.2 35.7 L81.7 35.4 L82.1 36.0 L82.6 35.3 L83.0 35.3 L83.5 36.0 L83.9 36.3 L84.4 35.6 L84.8 36.1 L85.3 36.3 L85.7 36.4 L86.2 36.4 L86.6 36.7 L87.1 35.7 L87.5 35.7 L88.0 35.3 L88.4 36.8 L88.9 35.4 L89.3 36.0 L89.8 35.8 L90.2 36.1 L90.7 36.2 L91.1 34.7 L91.6 36.5 L92.0 35.7 L92.5 35.2 L92.9 36.0 L93.4 34.1 L93.8 35.2 L94.3 35.5 L94.7 36.0 L95.2 35.3 L95.6 35.4 L96.1 35.9 L96.5 35.8 L97.0 35.9 L97.4 35.5 L97.9 36.0 L98.3 36.5 L98.8 36.0 L99.2 35.4 L99.7 35.3 L100.1 36.3 L100.6 35.8 L101.0 35.9 L101.5 36.3 L101.9 36.1 L102.4 35.5 L102.8 35.8 L103.3 35.5 L103.7 35.8 L104.2 33.4 L104.6 35.0 L105.1 35.2 L105.5 35.4 L106.0 35.4 L106.4 35.4 L106.9 36.2 L107.3 35.9 L107.8 35.9 L108.2 35.6 L108.7 35.3 L109.1 36.4 L109.6 35.4 L110.0 35.3 L110.5 35.7 L110.9 35.8 L111.4 36.4 L111.8 35.4 L112.3 35.3 L112.7 35.8 L113.2 35.6 L113.6 36.0 L114.1 35.9 L114.5 35.5 L115.0 35.1 L115.4 35.4 L115.4 39.7 L115.0 39.8 L114.5 40.6 L114.1 40.0 L113.6 39.6 L113.2 39.6 L112.7 39.7 L112.3 39.4 L111.8 40.6 L111.4 39.4 L110.9 38.8 L110.5 39.7 L110.0 39.1 L109.6 39.6 L109.1 40.6 L108.7 39.0 L108.2 39.5 L107.8 39.8 L107.3 39.4 L106.9 38.8 L106.4 40.1 L106.0 40.5 L105.5 40.1 L105.1 38.9 L104.6 40.2 L104.2 39.3 L103.7 40.0 L103.3 40.2 L102.8 39.7 L102.4 39.7 L101.9 39.0 L101.5 39.2 L101.0 39.2 L100.6 39.8 L100.1 39.1 L99.7 39.9 L99.2 41.1 L98.8 39.6 L98.3 39.7 L97.9 39.0 L97.4 40.0 L97.0 38.9 L96.5 39.6 L96.1 39.4 L95.6 40.0 L95.2 39.8 L94.7 38.7 L94.3 39.5 L93.8 39.7 L93.4 40.1 L92.9 40.7 L92.5 41.4 L92.0 40.3 L91.6 39.5 L91.1 40.0 L90.7 39.9 L90.2 39.7 L89.8 40.0 L89.3 40.1 L88.9 39.7 L88.4 39.6 L88.0 40.0 L87.5 39.7 L87.1 39.8 L86.6 39.9 L86.2 39.2 L85.7 38.8 L85.3 39.6 L84.8 41.1 L84.4 39.7 L83.9 39.7 L83.5 39.9 L83.0 39.7 L82.6 40.2 L82.1 40.7 L81.7 39.9 L81.2 39.6 L80.8 39.4 L80.3 39.7 L79.9 39.0 L79.4 39.9 L79.0 39.3 L78.5 40.1 L78.1 39.5 L77.6 39.9 L77.2 39.9 L76.7 39.4 L76.3 41.1 L75.8 39.2 L75.4 38.8 L74.9 39.0 L74.5 39.8 L74.0 40.0 L73.6 39.0 L73.1 39.1 L72.7 39.7 L72.2 42.2 L71.8 40.8 L71.3 39.6 L70.9 38.9 L70.4 39.7 L70.0 39.2 L69.5 39.2 L69.1 39.5 L68.6 40.0 L68.2 40.0 L67.7 39.2 L67.3 39.4 L66.8 39.4 L66.4 39.7 L65.9 39.2 L65.5 39.3 L65.0 40.2 L64.6 39.8 L64.1 40.4 L63.7 39.8 L63.2 39.1 L62.8 40.0 L62.3 39.4 L61.9 40.1 L61.4 38.8 L61.0 39.7 L60.5 40.0 L60.1 39.5 L59.6 41.3 L59.2 40.4 L58.7 42.9 L58.3 43.1 L57.8 41.0 L57.4 40.2 L56.9 40.1 L56.5 39.3 L56.0 40.0 L55.6 39.1 L55.1 38.9 L54.7 39.7 L54.2 39.6 L53.8 38.8 L53.3 40.1 L52.9 39.9 L52.4 40.1 L52.0 39.4 L51.5 39.7 L51.1 39.3 L50.6 39.0 L50.2 39.4 L49.7 40.0 L49.3 39.2 L48.8 39.9 L48.4 39.3 L47.9 40.1 L47.5 39.5 L47.0 39.9 L46.6 39.9 L46.1 40.1 L45.7 40.1 L45.2 39.4 L44.8 39.6 L44.3 40.0 L43.9 39.8 L43.4 39.7 L43.0 39.6 L42.5 40.1 L42.1 40.2 L41.6 40.6 L41.2 40.7 L40.7 40.6 L40.3 40.3 L39.8 40.1 L39.4 40.1 L38.9 39.7 L38.5 39.0 L38.0 39.0 L37.6 40.0 L37.1 39.5 L36.7 39.7 L36.2 39.7 L35.8 41.1 L35.3 39.0 L34.9 40.0 L34.4 40.0 L34.0 40.4 L33.5 39.0 L33.0 40.4 L32.6 41.2 L32.1 40.9 L31.7 41.4 L31.2 42.3 L30.8 39.8 L30.3 39.7 L29.9 40.0 L29.4 39.5 L29.0 39.3 L28.5 39.6 L28.1 38.6 L27.6 41.0 L27.2 39.8 L26.7 39.1 L26.3 38.8 L25.8 38.9 L25.4 39.8 L24.9 39.9 L24.5 40.0 L24.1 40.0 L23.6 39.7 L23.2 39.3 L22.7 39.8 L22.3 38.9 L21.8 40.0 L21.4 40.1 L20.9 39.5 L20.5 39.0 L20.0 40.2 L19.6 40.6 L19.1 40.5 L18.7 40.0 L18.2 40.2 L17.8 39.2 L17.3 39.5 L16.9 39.8 L16.4 38.9 L16.0 39.7 L15.5 38.9 L15.1 40.1 L14.6 39.2 L14.2 40.0 L13.7 39.3 L13.3 40.7 L12.8 40.0 L12.4 40.3 L11.9 40.8 L11.5 40.7 L11.0 40.3 L10.6 40.7 L10.1 39.5 L9.7 40.0 L9.2 40.1 L8.8 39.7 L8.3 39.1 L7.9 39.6 L7.4 39.5 L7.0 38.6 L6.5 39.9 L6.1 39.3 L5.6 39.6 L5.2 39.3 L4.7 39.1 L4.3 39.7 L3.8 39.9 L3.4 39.8 L2.9 38.8 L2.5 40.0 L2.0 38.9 L1.6 39.9 L1.1 39.8Z" fill="#5ef06a"/></svg>
<div class="t" style="left:535.70px;top:111px;font-size:5.6px;color:#f0f0f0;font-weight:bold;">N</div>
<div class="t" style="left:511.50px;top:156px;font-size:5.8px;color:#f0f0f0;transform:scaleX(0.860);transform-origin:0 50%;">Zm</div>
<div class="t" style="left:523.50px;top:156px;font-size:5.8px;color:#f0f0f0;transform:scaleX(0.860);transform-origin:0 50%;">100</div>
<div class="t" style="left:537.50px;top:157px;font-size:5.8px;color:#f0f0f0;transform:scaleX(0.860);transform-origin:0 50%;">%</div>
<div class="t" style="left:549.05px;top:98px;font-size:6px;color:#1a1a1a;transform:scaleX(0.860);transform-origin:0 50%;">Gain</div>
<div class="a " style="left:552.6px;top:104.7px;width:4.2px;height:50.3px;background:#454545;border:0.6px solid #6d7377;box-sizing:border-box;"></div>
<div class="a " style="left:553.9px;top:106.0px;width:1.6px;height:47.6px;background:#2a2a2a;"></div>
<div class="a " style="left:552.9px;top:109.60000000000001px;width:3.6px;height:0.8px;background:#9a9a9a;"></div>
<svg class="a" style="left:557.1px;top:107.80000000000001px" width="3" height="3.6" viewBox="0 0 3 3.6"><path d="M0 1.8L3 0v3.6z" fill="#d0d4d6"/></svg>
<div class="t" style="left:547.09px;top:157px;font-size:6.2px;color:#1a1a1a;transform:scaleX(0.860);transform-origin:0 50%;">0.0 dB</div>
<div class="a " style="left:426.9px;top:166.5px;width:19.1px;height:7.3px;background:#b7bdc0;border:0.7px solid #858c90;box-sizing:border-box;"></div>
<div class="t" style="left:431.65px;top:168px;font-size:5.8px;color:#1a1a1a;transform:scaleX(0.860);transform-origin:0 50%;">Play</div>
<div class="a " style="left:448.3px;top:166.5px;width:19.2px;height:7.3px;background:#aab1b5;border:0.9px solid #50565b;box-sizing:border-box;"></div>
<div class="t" style="left:452.35px;top:168px;font-size:5.8px;color:#1a1a1a;transform:scaleX(0.860);transform-origin:0 50%;">Loop</div>
<div class="t" style="left:470.90px;top:168px;font-size:6.2px;color:#1a1a1a;transform:scaleX(0.844);transform-origin:0 50%;">Transp</div>
<div class="a " style="left:490.9px;top:166.5px;width:18.2px;height:6.3px;background:#d9dee1;border:0.6px solid #9aa0a4;box-sizing:border-box;"></div>
<div class="t" style="left:495.15px;top:168px;font-size:5.8px;color:#222;transform:scaleX(0.860);transform-origin:0 50%;">0.00</div>
<div class="t" style="left:512.90px;top:169px;font-size:5.8px;color:#222;transform:scaleX(0.860);transform-origin:0 50%;">ct</div>
<div class="t" style="left:522.50px;top:169px;font-size:5.6px;color:#4c5863;transform:scaleX(0.903);transform-origin:0 50%;">0 : 0 : 0 : 0</div>
<div class="a " style="left:22.5px;top:300.6px;width:245.6px;height:110.7px;background:#bfc7c8;border:1px solid #4f5456;border-radius:3.2px;box-sizing:border-box;box-shadow:inset 0 0 0 0.6px #cfd9d9;"></div>
<div class="a " style="left:29.7px;top:304.20000000000005px;width:38.2px;height:9px;background:#f7901e;"></div>
<div class="t" style="left:31.30px;top:305px;font-size:8px;color:#1f1408;transform:scaleX(0.834);transform-origin:0 50%;">Filter SP_1</div>
<div class="t" style="left:31.20px;top:316px;font-size:5.0px;color:#1e1e1e;transform:scaleX(0.860);transform-origin:0 50%;">Filter response</div>
<div class="a " style="left:29.7px;top:323.3px;width:44px;height:7.6px;background:linear-gradient(#2c2c2c,#101010);"></div>
<div class="t" style="left:31.50px;top:325px;font-size:5.2px;color:#e8801a;transform:scaleX(0.900);transform-origin:0 50%;">bandpass</div>
<svg class="a" style="left:67.2px;top:326.20000000000005px" width="3" height="2" viewBox="0 0 3 2"><path d="M0 0h3L1.5 2z" fill="#e8801a"/></svg>
<div class="t" style="left:135.60px;top:316px;font-size:5.0px;color:#1e1e1e;transform:scaleX(0.860);transform-origin:0 50%;">Freq</div>
<div class="a " style="left:134.0px;top:323.0px;width:28.4px;height:7.9px;background:#0d0d0d;"></div>
<svg class="a" style="left:135.3px;top:325.55px" width="2" height="2.8" viewBox="0 0 2 2.8"><path d="M0 0L1.9 1.4 0 2.8z" fill="#d8d8d8"/></svg>
<div class="t" style="left:137.60px;top:326px;font-size:4.9px;color:#f2f2f2;transform:scaleX(0.860);transform-origin:0 50%;">851.53200</div>
<div class="t" style="left:168.45px;top:316px;font-size:5.0px;color:#1e1e1e;transform:scaleX(0.860);transform-origin:0 50%;">Gain</div>
<div class="a " style="left:166.85px;top:323.0px;width:28.4px;height:7.9px;background:#0d0d0d;"></div>
<svg class="a" style="left:168.15px;top:325.55px" width="2" height="2.8" viewBox="0 0 2 2.8"><path d="M0 0L1.9 1.4 0 2.8z" fill="#d8d8d8"/></svg>
<div class="t" style="left:170.45px;top:326px;font-size:4.9px;color:#f2f2f2;transform:scaleX(0.860);transform-origin:0 50%;">1.043038</div>
<div class="t" style="left:201.30px;top:316px;font-size:5.0px;color:#1e1e1e;transform:scaleX(0.860);transform-origin:0 50%;">Q or S</div>
<div class="a " style="left:199.7px;top:323.0px;width:28.4px;height:7.9px;background:#0d0d0d;"></div>
<svg class="a" style="left:201.0px;top:325.55px" width="2" height="2.8" viewBox="0 0 2 2.8"><path d="M0 0L1.9 1.4 0 2.8z" fill="#d8d8d8"/></svg>
<div class="t" style="left:203.30px;top:326px;font-size:4.9px;color:#f2f2f2;transform:scaleX(0.860);transform-origin:0 50%;">1.</div>
<svg class="a" style="left:29.7px;top:332.6px;background:#151515" width="198.5" height="65.4" viewBox="0 0 198.5 65.4"><rect x="44.40" y="0" width="0.8" height="65.4" fill="#505050"/><rect x="177.70" y="0" width="0.8" height="65.4" fill="#505050"/><rect x="0" y="32.30" width="198.5" height="0.8" fill="#5c5c5c"/><path d="M25.50 65.40 L98.80 33.00 Q106.30 31.00 113.80 33.00 L181.40 65.40 Z" fill="#4e2e12"/><path d="M25.50 65.40 L98.80 33.00 Q106.30 31.00 113.80 33.00 L181.40 65.40" fill="none" stroke="#d8761a" stroke-width="0.8"/><rect x="92.60" y="0" width="27.20" height="65.4" fill="rgba(240,130,30,0.17)"/><rect x="92.20" y="0" width="0.8" height="65.4" fill="#b0601c"/><rect x="119.40" y="0" width="0.8" height="65.4" fill="#b0601c"/><rect x="110.15" y="0" width="0.7" height="65.4" fill="#8a7a6a"/><rect x="0" y="7.88" width="1.6" height="0.6" fill="#666"/><rect x="0" y="16.05" width="1.6" height="0.6" fill="#666"/><rect x="0" y="24.23" width="1.6" height="0.6" fill="#666"/><rect x="0" y="32.40" width="1.6" height="0.6" fill="#666"/><rect x="0" y="40.58" width="1.6" height="0.6" fill="#666"/><rect x="0" y="48.75" width="1.6" height="0.6" fill="#666"/><rect x="0" y="56.93" width="1.6" height="0.6" fill="#666"/></svg>
<div class="t" style="left:218.99px;top:331px;font-size:5px;color:#e8e8e8;transform:scaleX(0.900);transform-origin:0 50%;">24</div>
<div class="a " style="left:224.79999999999998px;top:332.3px;width:2.4px;height:0.6px;background:#aaa;"></div>
<div class="t" style="left:218.99px;top:339px;font-size:5px;color:#e8e8e8;transform:scaleX(0.900);transform-origin:0 50%;">18</div>
<div class="a " style="left:224.79999999999998px;top:340.475px;width:2.4px;height:0.6px;background:#aaa;"></div>
<div class="t" style="left:218.99px;top:347px;font-size:5px;color:#e8e8e8;transform:scaleX(0.900);transform-origin:0 50%;">12</div>
<div class="a " style="left:224.79999999999998px;top:348.65000000000003px;width:2.4px;height:0.6px;background:#aaa;"></div>
<div class="t" style="left:221.50px;top:355px;font-size:5px;color:#e8e8e8;transform:scaleX(0.900);transform-origin:0 50%;">6</div>
<div class="a " style="left:224.79999999999998px;top:356.825px;width:2.4px;height:0.6px;background:#aaa;"></div>
<div class="a " style="left:224.79999999999998px;top:365.0px;width:2.4px;height:0.6px;background:#aaa;"></div>
<div class="t" style="left:220.00px;top:372px;font-size:5px;color:#e8e8e8;transform:scaleX(0.900);transform-origin:0 50%;">-6</div>
<div class="a " style="left:224.79999999999998px;top:373.175px;width:2.4px;height:0.6px;background:#aaa;"></div>
<div class="t" style="left:217.50px;top:380px;font-size:5px;color:#e8e8e8;transform:scaleX(0.900);transform-origin:0 50%;">-12</div>
<div class="a " style="left:224.79999999999998px;top:381.35px;width:2.4px;height:0.6px;background:#aaa;"></div>
<div class="t" style="left:217.50px;top:388px;font-size:5px;color:#e8e8e8;transform:scaleX(0.900);transform-origin:0 50%;">-18</div>
<div class="a " style="left:224.79999999999998px;top:389.52500000000003px;width:2.4px;height:0.6px;background:#aaa;"></div>
<div class="t" style="left:217.50px;top:396px;font-size:5px;color:#e8e8e8;transform:scaleX(0.900);transform-origin:0 50%;">-24</div>
<div class="a " style="left:224.79999999999998px;top:397.7px;width:2.4px;height:0.6px;background:#aaa;"></div>
<div class="a " style="left:29.7px;top:401.6px;width:66.3px;height:7.4px;background:#121212;border:1.2px solid #f7901e;border-width:1.2px 0;box-sizing:border-box;"></div>
<div class="t" style="left:30.90px;top:403px;font-size:5.0px;color:#f7901e;transform:scaleX(0.915);transform-origin:0 50%;">p filter_1_map</div>
<div class="a " style="left:569.6px;top:301.2px;width:244px;height:110.7px;background:#bfc7c8;border:1px solid #4f5456;border-radius:3.2px;box-sizing:border-box;box-shadow:inset 0 0 0 0.6px #cfd9d9;"></div>
<div class="a " style="left:575.8000000000001px;top:304.8px;width:38.2px;height:9px;background:#f7901e;"></div>
<div class="t" style="left:577.40px;top:306px;font-size:8px;color:#1f1408;transform:scaleX(0.834);transform-origin:0 50%;">Filter SP_2</div>
<div class="t" style="left:577.30px;top:317px;font-size:5.0px;color:#1e1e1e;transform:scaleX(0.860);transform-origin:0 50%;">Filter response</div>
<div class="a " style="left:575.8000000000001px;top:323.9px;width:44px;height:7.6px;background:linear-gradient(#2c2c2c,#101010);"></div>
<div class="t" style="left:577.60px;top:326px;font-size:5.2px;color:#e8801a;transform:scaleX(0.900);transform-origin:0 50%;">lowpass</div>
<svg class="a" style="left:613.3000000000001px;top:326.8px" width="3" height="2" viewBox="0 0 3 2"><path d="M0 0h3L1.5 2z" fill="#e8801a"/></svg>
<div class="t" style="left:681.80px;top:317px;font-size:5.0px;color:#1e1e1e;transform:scaleX(0.860);transform-origin:0 50%;">Freq</div>
<div class="a " style="left:680.2px;top:323.59999999999997px;width:28.4px;height:7.9px;background:#0d0d0d;"></div>
<svg class="a" style="left:681.5px;top:326.15px" width="2" height="2.8" viewBox="0 0 2 2.8"><path d="M0 0L1.9 1.4 0 2.8z" fill="#d8d8d8"/></svg>
<div class="t" style="left:683.80px;top:327px;font-size:4.9px;color:#f2f2f2;transform:scaleX(0.860);transform-origin:0 50%;">5126.8622</div>
<div class="t" style="left:714.65px;top:317px;font-size:5.0px;color:#1e1e1e;transform:scaleX(0.860);transform-origin:0 50%;">Gain</div>
<div class="a " style="left:713.0500000000001px;top:323.59999999999997px;width:28.4px;height:7.9px;background:#0d0d0d;"></div>
<svg class="a" style="left:714.35px;top:326.15px" width="2" height="2.8" viewBox="0 0 2 2.8"><path d="M0 0L1.9 1.4 0 2.8z" fill="#d8d8d8"/></svg>
<div class="t" style="left:716.65px;top:327px;font-size:4.9px;color:#f2f2f2;transform:scaleX(0.860);transform-origin:0 50%;">-0.763141</div>
<div class="t" style="left:747.50px;top:317px;font-size:5.0px;color:#1e1e1e;transform:scaleX(0.860);transform-origin:0 50%;">Q or S</div>
<div class="a " style="left:745.9000000000001px;top:323.59999999999997px;width:28.4px;height:7.9px;background:#0d0d0d;"></div>
<svg class="a" style="left:747.2px;top:326.15px" width="2" height="2.8" viewBox="0 0 2 2.8"><path d="M0 0L1.9 1.4 0 2.8z" fill="#d8d8d8"/></svg>
<div class="t" style="left:749.50px;top:327px;font-size:4.9px;color:#f2f2f2;transform:scaleX(0.860);transform-origin:0 50%;">1.</div>
<svg class="a" style="left:575.8000000000001px;top:333.9px;background:#151515" width="198.0" height="65.9" viewBox="0 0 198.0 65.9"><rect x="44.20" y="0" width="0.8" height="65.9" fill="#505050"/><rect x="110.30" y="0" width="0.8" height="65.9" fill="#505050"/><rect x="176.60" y="0" width="0.8" height="65.9" fill="#505050"/><rect x="0" y="32.55" width="198.0" height="0.8" fill="#5c5c5c"/><path d="M0.00 66.10 L0.00 35.30 L119.20 35.20 C134.20 34.50 146.20 34.10 155.20 34.50 C164.20 36.10 172.20 46.10 186.20 66.10 Z" fill="#4e2e12"/><path d="M0.00 35.30 L119.20 35.20 C134.20 34.50 146.20 34.10 155.20 34.50 C164.20 36.10 172.20 46.10 186.20 66.10" fill="none" stroke="#d8761a" stroke-width="0.8"/><rect x="144.30" y="0" width="28.00" height="65.9" fill="rgba(240,130,30,0.17)"/><rect x="143.90" y="0" width="0.8" height="65.9" fill="#a0581c"/><rect x="170.90" y="0" width="1.2" height="65.9" fill="#9a5418"/><rect x="0" y="7.94" width="1.6" height="0.6" fill="#666"/><rect x="0" y="16.18" width="1.6" height="0.6" fill="#666"/><rect x="0" y="24.41" width="1.6" height="0.6" fill="#666"/><rect x="0" y="32.65" width="1.6" height="0.6" fill="#666"/><rect x="0" y="40.89" width="1.6" height="0.6" fill="#666"/><rect x="0" y="49.13" width="1.6" height="0.6" fill="#666"/><rect x="0" y="57.36" width="1.6" height="0.6" fill="#666"/></svg>
<div class="t" style="left:764.59px;top:332px;font-size:5px;color:#e8e8e8;transform:scaleX(0.900);transform-origin:0 50%;">24</div>
<div class="a " style="left:770.4000000000001px;top:333.59999999999997px;width:2.4px;height:0.6px;background:#aaa;"></div>
<div class="t" style="left:764.59px;top:340px;font-size:5px;color:#e8e8e8;transform:scaleX(0.900);transform-origin:0 50%;">18</div>
<div class="a " style="left:770.4000000000001px;top:341.8375px;width:2.4px;height:0.6px;background:#aaa;"></div>
<div class="t" style="left:764.59px;top:348px;font-size:5px;color:#e8e8e8;transform:scaleX(0.900);transform-origin:0 50%;">12</div>
<div class="a " style="left:770.4000000000001px;top:350.075px;width:2.4px;height:0.6px;background:#aaa;"></div>
<div class="t" style="left:767.10px;top:357px;font-size:5px;color:#e8e8e8;transform:scaleX(0.900);transform-origin:0 50%;">6</div>
<div class="a " style="left:770.4000000000001px;top:358.31249999999994px;width:2.4px;height:0.6px;background:#aaa;"></div>
<div class="a " style="left:770.4000000000001px;top:366.54999999999995px;width:2.4px;height:0.6px;background:#aaa;"></div>
<div class="t" style="left:765.60px;top:373px;font-size:5px;color:#e8e8e8;transform:scaleX(0.900);transform-origin:0 50%;">-6</div>
<div class="a " style="left:770.4000000000001px;top:374.78749999999997px;width:2.4px;height:0.6px;background:#aaa;"></div>
<div class="t" style="left:763.10px;top:381px;font-size:5px;color:#e8e8e8;transform:scaleX(0.900);transform-origin:0 50%;">-12</div>
<div class="a " style="left:770.4000000000001px;top:383.025px;width:2.4px;height:0.6px;background:#aaa;"></div>
<div class="t" style="left:763.10px;top:390px;font-size:5px;color:#e8e8e8;transform:scaleX(0.900);transform-origin:0 50%;">-18</div>
<div class="a " style="left:770.4000000000001px;top:391.2625px;width:2.4px;height:0.6px;background:#aaa;"></div>
<div class="t" style="left:763.10px;top:398px;font-size:5px;color:#e8e8e8;transform:scaleX(0.900);transform-origin:0 50%;">-24</div>
<div class="a " style="left:770.4000000000001px;top:399.49999999999994px;width:2.4px;height:0.6px;background:#aaa;"></div>
<div class="a " style="left:575.8000000000001px;top:402.2px;width:66.3px;height:7.4px;background:#121212;border:1.2px solid #f7901e;border-width:1.2px 0;box-sizing:border-box;"></div>
<div class="t" style="left:577.00px;top:404px;font-size:5.0px;color:#f7901e;transform:scaleX(0.915);transform-origin:0 50%;">p filter_2_map</div>
<div class="t" style="left:363.00px;top:378px;font-size:5.0px;color:#1e1e1e;transform:scaleX(0.860);transform-origin:0 50%;">gain generale dei filtri</div>
<div class="t" style="left:396.85px;top:387px;font-size:7.0px;color:#1a1a1a;transform:scaleX(0.833);transform-origin:0 50%;">live.gain~[4]</div>
<div class="a " style="left:362.2px;top:394.5px;width:100.8px;height:4.2px;background:#2a2a2a;"></div>
<div class="a " style="left:362.5px;top:396.0px;width:100.2px;height:1.0px;background:#9a9a9a;"></div>
<svg class="a" style="left:455.6px;top:398.7px" width="4.4" height="3" viewBox="0 0 4.4 3"><path d="M2.2 0.2L4 2.8H0.4z" fill="#c9cfd0" stroke="#666" stroke-width="0.5"/></svg>
<div class="a " style="left:457.3px;top:394.3px;width:1px;height:4.6px;background:#d0d0d0;"></div>
<div class="t" style="left:363.00px;top:403px;font-size:6.6px;color:#1e1e1e;transform:scaleX(0.860);transform-origin:0 50%;">0.0 dB</div>
<div class="a " style="left:22.4px;top:414.5px;width:791.2px;height:110.9px;background:#bfc7c8;border:1px solid #4f5456;border-radius:3.2px;box-sizing:border-box;box-shadow:inset 0 0 0 0.6px #cfd9d9;"></div>
<div class="a " style="left:346px;top:419px;width:22px;height:22px;background:#cfdae4;"></div>
<svg class="a" style="left:348px;top:421px" width="18" height="18" viewBox="0 0 18 18"><path d="M2.6 6.6h3.4L10.2 3.2v11.6L6 11.4H2.6z" fill="#5b6a78"/><path d="M12 6.4a3.4 3.4 0 0 1 0 5.2M13.8 4.6a5.8 5.8 0 0 1 0 8.8" fill="none" stroke="#5b6a78" stroke-width="1.3"/></svg>
<div class="t" style="left:346.55px;top:444px;font-size:7.4px;color:#1a1a1a;transform:scaleX(0.853);transform-origin:0 50%;">Master</div>
<div class="a " style="left:353.8px;top:452px;width:4.5px;height:61.6px;background:#474747;border:0.6px solid #6d7377;box-sizing:border-box;"></div>
<div class="a " style="left:355.1px;top:453.3px;width:1.9px;height:59px;background:#2c2c2c;"></div>
<div class="a " style="left:354.1px;top:457.2px;width:3.9px;height:0.9px;background:#a0a0a0;"></div>
<svg class="a" style="left:358.4px;top:453.5px" width="3" height="3.6" viewBox="0 0 3 3.6"><path d="M0 1.8L3 0v3.6z" fill="#d0d4d6"/></svg>
<div class="t" style="left:347.05px;top:515px;font-size:7.2px;color:#1a1a1a;transform:scaleX(0.879);transform-origin:0 50%;">0.0 dB</div>
<div class="a " style="left:374.9px;top:419px;width:74.9px;height:8.8px;background:#f7901e;"></div>
<div class="t" style="left:376.60px;top:420px;font-size:7.4px;color:#2a1a08;transform:scaleX(0.880);transform-origin:0 50%;">Reverb</div>
<div class="a " style="left:374.9px;top:430px;width:74.9px;height:10.2px;background:linear-gradient(#2a2a2a,#0e0e0e);"></div>
<div class="t" style="left:377.00px;top:432px;font-size:7.6px;color:#f08a1a;transform:scaleX(0.919);transform-origin:0 50%;">Preset 1</div>
<svg class="a" style="left:443px;top:434px" width="3.6" height="2.4" viewBox="0 0 3.6 2.4"><path d="M0 0h3.6L1.8 2.4z" fill="#f08a1a"/></svg>
<svg class="a" style="left:374.9px;top:444.6px" width="74.9" height="76.4" viewBox="0 0 74.9 76.4"><rect x="0" y="0" width="74.9" height="76.4" fill="#7a3f0c"/><rect x="19.00" y="0.00" width="55.90" height="16.70" fill="#0a0a0a"/><rect x="18.50" y="0.00" width="1" height="15.70" fill="#f08a1a"/><rect x="43.80" y="15.70" width="31.10" height="15.70" fill="#0a0a0a"/><rect x="43.30" y="15.70" width="1" height="14.70" fill="#f08a1a"/><rect x="52.90" y="30.40" width="22.00" height="16.60" fill="#0a0a0a"/><rect x="52.40" y="30.40" width="1" height="15.60" fill="#f08a1a"/><rect x="0" y="60.10" width="74.9" height="1" fill="#2a1505"/><rect x="73.90" y="46.00" width="1" height="30.40" fill="#f08a1a"/></svg>
<div class="t" style="left:457.55px;top:417px;font-size:6px;color:#1a1a1a;transform:scaleX(0.849);transform-origin:0 50%;">Dry/wet reverb</div>
<svg class="a" style="left:467.2px;top:422.8px" width="14.0" height="14.0" viewBox="-7.0 -7.0 14.0 14.0"><path d="M-3.72 4.68A6.0 6.0 0 1 1 3.72 4.68" fill="none" stroke="#1e1e1e" stroke-width="0.9"/><path d="M-0.60 0.30L-3.72 4.68" stroke="#1e1e1e" stroke-width="0.9"/></svg>
<div class="t" style="left:472.59px;top:438px;font-size:5.8px;color:#1a1a1a;">0</div>
<div class="a " style="left:458px;top:448px;width:35px;height:6.9px;background:#f7901e;"></div>
<div class="t" style="left:459.40px;top:450px;font-size:5.0px;color:#2a1a08;transform:scaleX(0.860);transform-origin:0 50%;">Size</div>
<div class="a " style="left:458px;top:462.3px;width:35px;height:6.9px;background:#f7901e;"></div>
<div class="t" style="left:459.40px;top:464px;font-size:5.0px;color:#2a1a08;transform:scaleX(0.860);transform-origin:0 50%;">Decay time</div>
<div class="a " style="left:458px;top:479.6px;width:35px;height:6.9px;background:#f7901e;"></div>
<div class="t" style="left:459.40px;top:481px;font-size:5.0px;color:#2a1a08;transform:scaleX(0.860);transform-origin:0 50%;">Dumping</div>
<div class="a " style="left:458px;top:495.3px;width:35px;height:6.9px;background:#f7901e;"></div>
<div class="t" style="left:459.40px;top:497px;font-size:5.0px;color:#2a1a08;transform:scaleX(0.860);transform-origin:0 50%;">Diffusion</div>
<div class="a " style="left:458px;top:512.1px;width:35px;height:6.9px;background:#f7901e;"></div>
<div class="t" style="left:459.40px;top:514px;font-size:5.0px;color:#2a1a08;transform:scaleX(0.860);transform-origin:0 50%;">Early reflections</div>
<div class="a " style="left:513.2px;top:427.3px;width:31.1px;height:6px;background:#151515;border:1px solid #f7901e;border-width:1px 0;box-sizing:border-box;"></div>
<div class="t" style="left:514.60px;top:429px;font-size:4.6px;color:#f7901e;transform:scaleX(0.860);transform-origin:0 50%;">p spectral view</div>
<svg class="a" style="left:3.3000000000000007px;top:186.4px" width="10" height="10" viewBox="0 0 10 10"><path d="M5 1.5L8.6 3.4V7.3L5 9.2 1.4 7.3V3.4z" fill="#e8e8e8"/><path d="M1.6 3.5L5 5.3 8.4 3.5M5 5.3V9" stroke="#2d2d2d" stroke-width="0.6" fill="none"/><circle cx="8.2" cy="2.2" r="1.9" fill="#f2d21a"/></svg>
<svg class="a" style="left:3.3000000000000007px;top:203.8px" width="10" height="10" viewBox="0 0 10 10"><circle cx="5" cy="5" r="3.8" fill="none" stroke="#cfcfcf" stroke-width="0.8"/><circle cx="5" cy="5" r="2" fill="none" stroke="#cfcfcf" stroke-width="0.8"/></svg>
<svg class="a" style="left:3.3000000000000007px;top:221.0px" width="10" height="10" viewBox="0 0 10 10"><rect x="1.5" y="3" width="7" height="4" rx="0.6" fill="none" stroke="#5a5a5a" stroke-width="0.8"/></svg>
<svg class="a" style="left:3.3000000000000007px;top:238.8px" width="10" height="10" viewBox="0 0 10 10"><path d="M4.2 1.5v5.6M4.2 1.5c1.2 0.6 2.7 1.3 2.7 3" stroke="#e6e6e6" stroke-width="0.9" fill="none"/><ellipse cx="3.2" cy="7.4" rx="1.6" ry="1.2" fill="#e6e6e6"/></svg>
<svg class="a" style="left:3.3000000000000007px;top:254.8px" width="10" height="10" viewBox="0 0 10 10"><path d="M1 2v6M9 2v6" stroke="#dcdcdc" stroke-width="0.8" stroke-dasharray="1 0.8"/><path d="M3.2 2.6L6.8 5 3.2 7.4z" fill="#dcdcdc"/><path d="M7.2 2.6v4.8" stroke="#dcdcdc" stroke-width="0.8"/></svg>
<svg class="a" style="left:3.3000000000000007px;top:272.6px" width="10" height="10" viewBox="0 0 10 10"><rect x="1.3" y="1.8" width="7.4" height="6.4" fill="none" stroke="#dcdcdc" stroke-width="0.8"/><path d="M1.8 7.6L4 4.6 5.6 6.4 6.8 5.2 8.2 7.6z" fill="#dcdcdc"/></svg>
<svg class="a" style="left:3.3000000000000007px;top:289.5px" width="10" height="10" viewBox="0 0 10 10"><path d="M3 7.6L7.2 3.4a1.3 1.3 0 0 0-1.8-1.8L1.8 5.2a2.2 2.2 0 0 0 3.1 3.1L8 5.2" fill="none" stroke="#d8d8d8" stroke-width="0.8"/></svg>
<svg class="a" style="left:3.3000000000000007px;top:306.3px" width="10" height="10" viewBox="0 0 10 10"><path d="M2.2 5h1.6M6 2.6h2.6M6 7.4h2.6" stroke="#f0f0f0" stroke-width="1"/><path d="M3.6 2.4h2.8v5.2H3.6a2.6 2.6 0 0 1 0-5.2z" fill="#f0f0f0"/></svg>
<svg class="a" style="left:3.3000000000000007px;top:324.0px" width="10" height="10" viewBox="0 0 10 10"><path d="M1.2 5h7.6M3 3.2L1.2 5 3 6.8M7 3.2L8.8 5 7 6.8" stroke="#565656" stroke-width="0.8" fill="none"/></svg>
<svg class="a" style="left:3.3000000000000007px;top:337.6px" width="10" height="10" viewBox="0 0 10 10"><circle cx="5" cy="5" r="3.6" fill="#555"/><path d="M3.6 3.6L5 6.6 6.4 3.6" stroke="#2d2d2d" stroke-width="0.7" fill="none"/></svg>
<svg class="a" style="left:3.3000000000000007px;top:354.8px" width="10" height="10" viewBox="0 0 10 10"><circle cx="5" cy="5" r="3.6" fill="none" stroke="#555" stroke-width="0.8"/><path d="M4.2 2.6v4.4h1a1.2 1.2 0 0 0 0-2.4h-1" stroke="#555" stroke-width="0.7" fill="none"/></svg>
<svg class="a" style="left:3.3000000000000007px;top:372.0px" width="10" height="10" viewBox="0 0 10 10"><path d="M5 1.2L6.1 3.8 8.8 4 6.7 5.8 7.4 8.6 5 7.1 2.6 8.6 3.3 5.8 1.2 4 3.9 3.8z" fill="#565656"/></svg>
<svg class="a" style="left:822.6px;top:191.9px" width="10" height="10" viewBox="0 0 10 10"><circle cx="4.2" cy="4.2" r="2.8" fill="none" stroke="#ececec" stroke-width="1"/><path d="M6.2 6.2L8.8 8.8" stroke="#ececec" stroke-width="1.2"/></svg>
<svg class="a" style="left:822.6px;top:213.5px" width="10" height="10" viewBox="0 0 10 10"><circle cx="5" cy="5" r="4" fill="#e6e6e6"/><path d="M5.3 4.3L4.6 7.4" stroke="#2d2d2d" stroke-width="0.9"/><circle cx="5.6" cy="2.8" r="0.6" fill="#2d2d2d"/></svg>
<svg class="a" style="left:822.6px;top:235.0px" width="10" height="10" viewBox="0 0 10 10"><rect x="1.2" y="2" width="3.4" height="6" fill="#e6e6e6"/><rect x="5.4" y="2" width="3.4" height="6" fill="#e6e6e6"/></svg>
<svg class="a" style="left:822.6px;top:256.0px" width="10" height="10" viewBox="0 0 10 10"><path d="M1.5 2.5h6M1.5 4.3h6M1.5 6.1h6M1.5 7.9h6" stroke="#aaa" stroke-width="1"/><circle cx="8" cy="2" r="1.8" fill="#a6e05a"/></svg>
<svg class="a" style="left:822.6px;top:293.0px" width="10" height="10" viewBox="0 0 10 10"><rect x="1" y="3" width="8" height="5.4" rx="0.8" fill="#e6e6e6"/><rect x="3.4" y="1.8" width="3.2" height="1.6" fill="#e6e6e6"/><circle cx="5" cy="5.7" r="1.6" fill="#2d2d2d"/><circle cx="5" cy="5.7" r="0.9" fill="#e6e6e6"/></svg>
<svg class="a" style="left:822.6px;top:314.9px" width="10" height="10" viewBox="0 0 10 10"><path d="M2.5 1.5v7M5 1.5v7M7.5 1.5v7" stroke="#d8d8d8" stroke-width="0.7"/><rect x="1.5" y="5" width="2" height="1.2" fill="#e0e0e0"/><rect x="4" y="3" width="2" height="1.2" fill="#e0e0e0"/><rect x="6.5" y="6" width="2" height="1.2" fill="#e0e0e0"/></svg>
<div class="a " style="left:822.9px;top:475.2px;width:4px;height:50.9px;background:repeating-linear-gradient(#4e4e4e 0 1px,#3e3e3e 1px 2px);"></div>
<div class="a " style="left:828.1px;top:475.2px;width:3.9px;height:50.9px;background:repeating-linear-gradient(#4e4e4e 0 1px,#3e3e3e 1px 2px);"></div>
<div class="a " style="left:825.1px;top:485.6px;width:5px;height:5px;background:#f0f0f0;border-radius:50%;"></div>
<svg class="a" style="left:3.3000000000000007px;top:530.2px" width="10" height="10" viewBox="0 0 10 10"><rect x="2.3" y="4.6" width="5.4" height="4" rx="0.5" fill="#e0e0e0"/><path d="M3.3 4.6V3.2a1.7 1.7 0 0 1 3.4 0v1.4" fill="none" stroke="#e0e0e0" stroke-width="0.9"/></svg>
<svg class="a" style="left:17.6px;top:530.2px" width="10" height="10" viewBox="0 0 10 10"><rect x="1.8" y="1.8" width="6.4" height="6.4" fill="none" stroke="#5a5a5a" stroke-width="0.8"/><path d="M5 5L8.5 8.5" stroke="#5a5a5a" stroke-width="0.8"/></svg>
<svg class="a" style="left:39.0px;top:530.2px" width="10" height="10" viewBox="0 0 10 10"><rect x="1" y="1.6" width="8" height="4.8" fill="#f0c800"/><path d="M2.5 9L5 6.4 7.5 9" stroke="#f0c800" stroke-width="1" fill="none"/></svg>
<svg class="a" style="left:60.599999999999994px;top:530.2px" width="10" height="10" viewBox="0 0 10 10"><rect x="1" y="2" width="5.4" height="4" fill="none" stroke="#e0e0e0" stroke-width="0.9"/><rect x="3.8" y="4.2" width="5.4" height="4" fill="#e0e0e0"/></svg>
<svg class="a" style="left:82.0px;top:530.2px" width="10" height="10" viewBox="0 0 10 10"><path d="M1.5 3h7M1.5 5h7M1.5 7h7" stroke="#555" stroke-width="0.8"/><rect x="4" y="2" width="2" height="6" fill="#555"/></svg>
<svg class="a" style="left:95.5px;top:530.2px" width="10" height="10" viewBox="0 0 10 10"><path d="M2.5 1.5v7M5 1.5v7M7.5 1.5v7M1.5 2.5h7M1.5 5h7M1.5 7.5h7" stroke="#4f4f4f" stroke-width="0.6"/></svg>
<svg class="a" style="left:124.5px;top:530.2px" width="10" height="10" viewBox="0 0 10 10"><path d="M2 8L7 3M6 1.5l2.5 2.5" stroke="#555" stroke-width="0.9" fill="none"/></svg>
<svg class="a" style="left:146.0px;top:530.2px" width="10" height="10" viewBox="0 0 10 10"><path d="M1.6 8.6L5.4 4.8" stroke="#e6e6e6" stroke-width="1.5" stroke-linecap="round"/><path d="M4.6 4.4a2.6 2.6 0 0 1 3.4-3.2L6.6 2.6l0.8 1.4 1.4 0.2 1-1.2a2.6 2.6 0 0 1-3.6 3.2z" fill="#e6e6e6"/></svg>
<svg class="a" style="left:167.0px;top:530.2px" width="10" height="10" viewBox="0 0 10 10"><rect x="1.4" y="1.5" width="7.2" height="7" fill="#e8e8e8"/><path d="M3.4 1.5v7M5 1.5v7M6.6 1.5v7" stroke="#2b2b2b" stroke-width="0.6"/><path d="M3.4 1.5v4M5 1.5v4M6.6 1.5v4" stroke="#2b2b2b" stroke-width="1.1"/></svg>
<svg class="a" style="left:188.7px;top:530.2px" width="10" height="10" viewBox="0 0 10 10"><path d="M1.5 1.8h7M1.5 8.2h7" stroke="#dcdcdc" stroke-width="0.7"/><path d="M1.5 3.2l1.4 1.6 1.4-1.6 1.4 1.6 1.4-1.6 1.4 1.6M1.5 5.2l1.4 1.6 1.4-1.6 1.4 1.6 1.4-1.6 1.4 1.6" fill="none" stroke="#dcdcdc" stroke-width="0.6"/></svg>
<svg class="a" style="left:798.7px;top:530.2px" width="10" height="10" viewBox="0 0 10 10"><circle cx="5" cy="5" r="3.8" fill="none" stroke="#6a6a6a" stroke-width="0.8"/><path d="M4 3.3L6.6 5 4 6.7z" fill="#e6e6e6"/></svg>
<svg class="a" style="left:822.6px;top:530.2px" width="10" height="10" viewBox="0 0 10 10"><path d="M3.2 3.2a3.3 3.3 0 1 0 3.6 0" fill="none" stroke="#e6e6e6" stroke-width="0.9"/><path d="M5 1.5v3.5" stroke="#e6e6e6" stroke-width="0.9"/></svg>
</body></html>
